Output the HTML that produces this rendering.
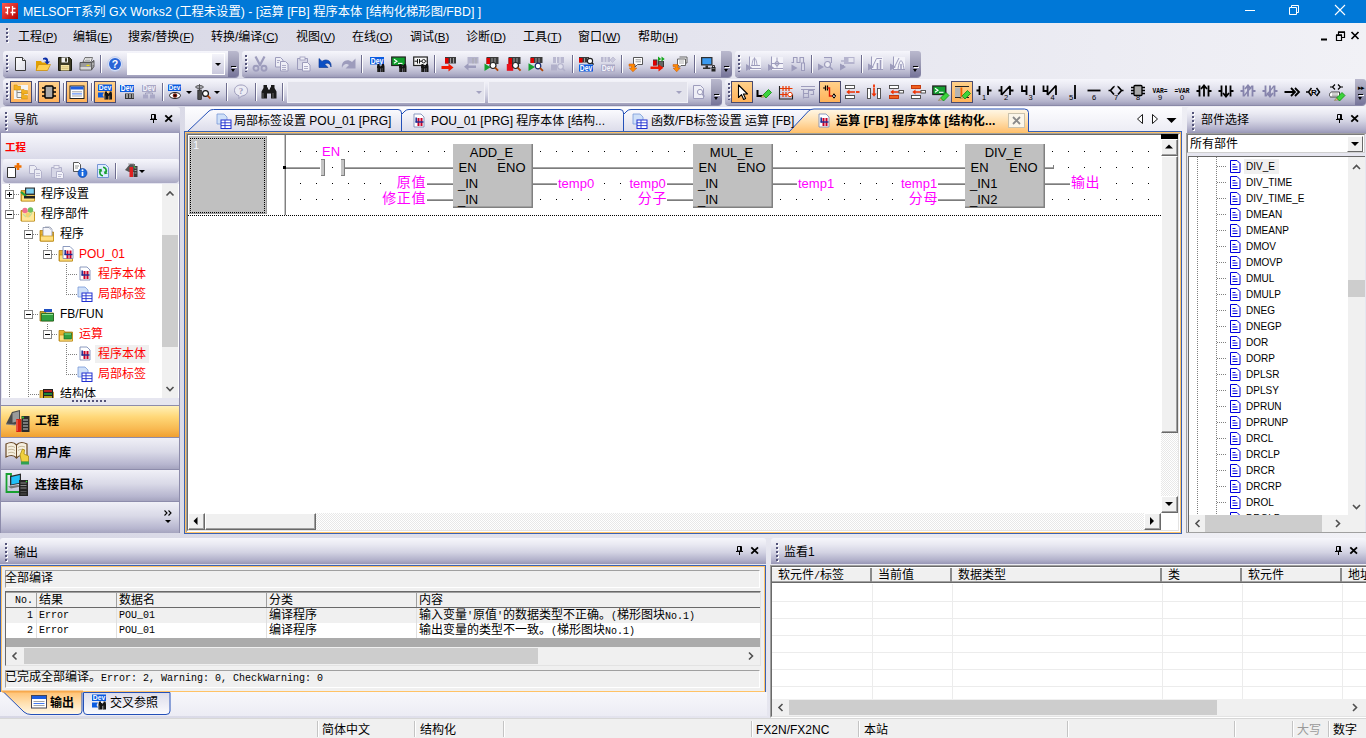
<!DOCTYPE html>
<html lang="zh-CN"><head><meta charset="utf-8"><title>MELSOFT GX Works2</title>
<style>
*{box-sizing:border-box;margin:0;padding:0}
html,body{width:1366px;height:738px;overflow:hidden}
body{position:relative;font-family:"Liberation Sans","Noto Sans CJK SC",sans-serif;font-size:12px;color:#000;
 background:linear-gradient(90deg,#d7d7e5 0%,#e4e4ee 50%,#f1f1f6 100%);line-height:1}
.a{position:absolute}
.t{position:absolute;white-space:nowrap;line-height:14px;height:14px}
svg{position:absolute;overflow:visible}
#title{left:0;top:0;width:1366px;height:23px;background:#0078d7;color:#fff}
.tb{position:absolute;height:26px;border-radius:3px 3px 4px 4px;
 background:linear-gradient(180deg,#f6f6fc 0%,#e6e6f0 30%,#cfcfe0 62%,#b1b0c9 88%,#9c9bb8 100%);
 box-shadow:0 1px 0 #8a89a8}
.cap{position:absolute;top:0;right:0;width:11px;height:26px;border-radius:0 3px 4px 0;
 background:linear-gradient(180deg,#bab9ce 0%,#9c9bb4 50%,#76749a 100%)}
.cap i{position:absolute;left:3px;top:15px;width:5px;height:1px;background:#000;box-shadow:1px 1px 0 #fff}
.cap b{position:absolute;left:3px;top:18px;width:0;height:0;border:3px solid transparent;border-top:3px solid #000;border-bottom:0;border-left-width:2.5px;border-right-width:2.5px}
.grip{position:absolute;left:3px;top:4px;width:3px;height:17px;
 background:repeating-linear-gradient(180deg,#54547a 0,#54547a 2px,transparent 2px,transparent 4px) 0 0/2px 100% no-repeat,repeating-linear-gradient(180deg,transparent 0,transparent 1px,#fff 1px,#fff 3px,transparent 3px,transparent 4px) 1px 0/2px 100% no-repeat}
.sep{position:absolute;top:4px;width:1px;height:18px;background:#6e6d8f;box-shadow:1px 0 0 #fff}
.chk{position:absolute;top:2px;width:22px;height:22px;border:1px solid #4b4b6f;
 background:linear-gradient(180deg,#ffd08a 0%,#ffb25a 100%)}
.ph{position:absolute;height:26px;background:linear-gradient(180deg,#f6f6fb 0%,#e9e9f2 25%,#d3d3e3 55%,#b1b0ca 85%,#9897b6 100%);border-radius:3px 3px 0 0}
.pgrip{position:absolute;left:5px;top:5px;width:3px;height:19px;
 background:repeating-linear-gradient(180deg,#54547a 0,#54547a 2px,transparent 2px,transparent 4px) 0 0/2px 100% no-repeat,repeating-linear-gradient(180deg,transparent 0,transparent 1px,#fff 1px,#fff 3px,transparent 3px,transparent 4px) 1px 0/2px 100% no-repeat}
</style></head>
<body>
<!-- top -->
<div id="title" class="a">
<svg style="left:2px;top:3px" width="16" height="16" viewBox="0 0 16 16"><defs><linearGradient id="gi" x1="0" y1="0" x2="1" y2="1"><stop offset="0" stop-color="#ff5a50"/><stop offset="1" stop-color="#b00000"/></linearGradient></defs><rect width="16" height="16" fill="url(#gi)"/><path d="M3 4.5h5M5.5 4.5v7M3.5 9.5h2M10.5 3v9.5M10.5 5.5h3M8.5 9.5h5" stroke="#fff" stroke-width="1.3" fill="none"/></svg>
<div class="t" id="ttxt" style="left:23px;top:5px;font-size:12.300px;line-height:15px;height:15px">MELSOFT系列 GX Works2 (工程未设置) - [运算 [FB] 程序本体 [结构化梯形图/FBD] ]</div>
<svg style="left:1227px;top:-1px" width="138" height="23" viewBox="0 0 138 23"><path d="M18 11.5h10" stroke="#fff" stroke-width="1" fill="none"/><path d="M62.5 8.5h7v7h-7zM64.5 8.5v-2h7v7h-2" stroke="#fff" stroke-width="1" fill="none"/><path d="M108 6l10 10M118 6l-10 10" stroke="#fff" stroke-width="1.1" fill="none"/></svg>
</div>
<div class="grip" style="left:6px;top:28px;height:15px"></div>
<div class="t" style="left:18px;top:30px">工程<span style="font-size:11.500px">(<u>P</u>)</span></div>
<div class="t" style="left:73px;top:30px">编辑<span style="font-size:11.500px">(<u>E</u>)</span></div>
<div class="t" style="left:128px;top:30px">搜索/替换<span style="font-size:11.500px">(<u>F</u>)</span></div>
<div class="t" style="left:211px;top:30px">转换/编译<span style="font-size:11.500px">(<u>C</u>)</span></div>
<div class="t" style="left:296px;top:30px">视图<span style="font-size:11.500px">(<u>V</u>)</span></div>
<div class="t" style="left:352px;top:30px">在线<span style="font-size:11.500px">(<u>O</u>)</span></div>
<div class="t" style="left:410px;top:30px">调试<span style="font-size:11.500px">(<u>B</u>)</span></div>
<div class="t" style="left:466px;top:30px">诊断<span style="font-size:11.500px">(<u>D</u>)</span></div>
<div class="t" style="left:523px;top:30px">工具<span style="font-size:11.500px">(<u>T</u>)</span></div>
<div class="t" style="left:578px;top:30px">窗口<span style="font-size:11.500px">(<u>W</u>)</span></div>
<div class="t" style="left:638px;top:30px">帮助<span style="font-size:11.500px">(<u>H</u>)</span></div>
<svg style="left:1316px;top:28px" width="50" height="16" viewBox="0 0 50 16"><path d="M5 11.5h6" stroke="#000" stroke-width="2" fill="none"/><path d="M20.5 7.5h5v5h-5zM22.5 7v-2.5h6v5h-2.5" stroke="#000" stroke-width="1.2" fill="none"/><path d="M20 7h6M22 4h7" stroke="#000" stroke-width="1.6"/><path d="M35.5 4l7 7M42.5 4l-7 7" stroke="#000" stroke-width="1.7" fill="none"/></svg>
<!-- tool -->
<div class="tb" style="left:3px;top:51px;width:236px"><div class="grip"></div><div class="cap"><i></i><b></b></div>
<svg style="left:10px;top:5px" width="16" height="16" viewBox="0 0 16 16"><defs><linearGradient id="gn" x1="0" y1="0" x2="1" y2="1"><stop offset="0" stop-color="#fff"/><stop offset="1" stop-color="#dcdce6"/></linearGradient></defs><path d="M2.5 1.5h7l3 3v10h-10z" fill="url(#gn)" stroke="#3a3a3a"/><path d="M9.5 1.5v3h3" fill="#f4f4f4" stroke="#3a3a3a"/></svg>
<svg style="left:32px;top:5px" width="16" height="16" viewBox="0 0 16 16"><path d="M1 5h5l1 1.5h5v8h-11z" fill="#e2a000"/><path d="M1 14.5l2.5-6h12l-3 6z" fill="#ffd050" stroke="#c08000" stroke-width="0.6"/><path d="M8 2.2c3-1.5 5.5 0 5.2 3.2h1.8l-2.8 3.2l-2.8-3.2h1.8c0-1.6-1.2-2.4-3.2-1.6z" fill="#0a2ea8"/></svg>
<svg style="left:53.5px;top:5px" width="16" height="16" viewBox="0 0 16 16"><path d="M1.5 1.5h11l2 2v11h-13z" fill="#3c3a24" stroke="#1c1c10"/><rect x="4.5" y="1.5" width="6.5" height="5" fill="#f2f2f2"/><rect x="8" y="2.2" width="2" height="3.5" fill="#3c3a24"/><rect x="3.8" y="9" width="8.4" height="5.5" fill="#f7e7a6"/><path d="M4.5 10.8h7M4.5 12.6h7" stroke="#cdb870" stroke-width="0.8"/></svg>
<svg style="left:76px;top:5px" width="16" height="16" viewBox="0 0 16 16"><path d="M4 6l2-4.5h7.5l-1.5 4.5z" fill="#f4f4f4" stroke="#555" stroke-width="0.8"/><path d="M6.5 3h5M6 4.5h5" stroke="#888" stroke-width="0.6"/><path d="M1 6.5h11.5l2.5-2v6l-2.5 3.5h-11.5z" fill="#9b9b9b" stroke="#444" stroke-width="0.8"/><path d="M1 6.5h11.5v7.5M12.5 6.5l2.5-2" stroke="#555" stroke-width="0.8" fill="none"/><rect x="1.5" y="11" width="10.5" height="2.5" fill="#d6d6d6"/><rect x="7.5" y="8.8" width="3" height="1.2" fill="#f0e000"/><circle cx="14" cy="8" r="0.7" fill="#ddd"/></svg>
<div class="sep" style="left:97px"></div>
<svg style="left:104px;top:5px" width="16" height="16" viewBox="0 0 16 16"><circle cx="8" cy="8" r="7.3" fill="#dfe6f8" stroke="#b9c6ea" stroke-width="0.8"/><circle cx="8" cy="8" r="6" fill="#2a64d6"/><path d="M4 5a5 4 0 0 1 8 0a6 6 0 0 0 -8 0z" fill="#7fa6f0"/><text x="8" y="12" text-anchor="middle" font-family="Liberation Sans,sans-serif" font-size="10.5" font-weight="bold" fill="#fff">?</text></svg>
<div class="a" style="left:124px;top:2px;width:98px;height:22px;background:#fff"></div>
<div class="a" style="left:209px;top:3px;width:12px;height:20px;background:linear-gradient(180deg,#f4f4fa,#c9c8dc)"></div>
<div class="a" style="left:212px;top:12px;width:0;height:0;border:3px solid transparent;border-top:3px solid #000;border-bottom:0"></div>
</div>
<div class="tb" style="left:242px;top:51px;width:490px"><div class="grip"></div><div class="cap"><i></i><b></b></div>
<svg style="left:9.5px;top:5px" width="16" height="16" viewBox="0 0 16 16"><path d="M3.500 0.500l5 9.500M12.500 0.500l-5 9.500" stroke="#9d9cbc" stroke-width="2.200" fill="none"/><circle cx="4" cy="12.300" r="2.500" fill="none" stroke="#9d9cbc" stroke-width="1.900"/><circle cx="12" cy="12.300" r="2.500" fill="none" stroke="#9d9cbc" stroke-width="1.900"/></svg>
<svg style="left:32px;top:5px" width="16" height="16" viewBox="0 0 16 16"><path d="M1.5 1.5h5l2.5 2.5v7h-7.5z" fill="#eeeef6" stroke="#9d9cbc"/><path d="M6.5 5.5h5l2.500 2.500v7h-7.500z" fill="#eeeef6" stroke="#9d9cbc"/><path d="M8 9.500h4M8 11.500h4M8 13.500h4M3 4.500h3M3 6.500h2" stroke="#9d9cbc" stroke-width="0.8"/></svg>
<svg style="left:54px;top:5px" width="16" height="16" viewBox="0 0 16 16"><path d="M1.500 2.500h10v11h-10z" fill="#d6d6e6" stroke="#9d9cbc"/><rect x="4" y="1" width="5" height="3" fill="#eeeef6" stroke="#9d9cbc" stroke-width="0.8"/><path d="M6.500 6.500h5l2.500 2.500v6h-7.500z" fill="#f3f3fa" stroke="#9d9cbc"/><path d="M8 10.500h4M8 12.500h4" stroke="#9d9cbc" stroke-width="0.8"/></svg>
<svg style="left:76px;top:5px" width="16" height="16" viewBox="0 0 16 16"><path d="M1 2.5v9h9l-3.200-3.200c2.200-2 5.200-1.200 6.200 2.700c1-6-4.500-9-9-5.600z" fill="#0c4fc4" stroke="#06308a" stroke-width="0.6"/></svg>
<svg style="left:98px;top:5px" width="16" height="16" viewBox="0 0 16 16"><path d="M15.500 2.500v10h-10l3.500-3.500c-2.300-2-5.600-1.200-7 3c-1.200-6.500 5-10 10-6z" fill="#9d9cbc"/></svg>
<div class="sep" style="left:119px"></div>
<svg style="left:126.5px;top:5px" width="16" height="16" viewBox="0 0 16 16"><rect x="1" y="1" width="14" height="7.5" fill="#0a5be0"/><text x="1.8" y="7.8" font-family="Liberation Sans,sans-serif" font-size="8.8" font-weight="bold" fill="#fff" textLength="12.4" lengthAdjust="spacingAndGlyphs">Dev</text><path d="M8.5 8h2v1.500h1v6.500h-3.500v-5.500z M13 8h2l0.500 2.500v5.500h-3.500v-6.500h1z" fill="#141414"/><path d="M10.8 10.5h1.600v2h-1.600z" fill="#141414"/><path d="M8.7 12v4M13.2 12v4" stroke="#6a6a6a" stroke-width="0.700"/></svg>
<svg style="left:148.5px;top:5px" width="16" height="16" viewBox="0 0 16 16"><rect x="0.7" y="1" width="13.600" height="8.500" fill="#10a02c" stroke="#222" stroke-width="1.200"/><path d="M3 3.200l3 2l-3 2" stroke="#fff" stroke-width="1.100" fill="none"/><path d="M7 7.400h4.500" stroke="#fff" stroke-width="1.100"/><path d="M8.5 8h2v1.500h1v6.500h-3.500v-5.500z M13 8h2l0.500 2.500v5.500h-3.500v-6.500h1z" fill="#141414"/><path d="M10.8 10.5h1.600v2h-1.600z" fill="#141414"/><path d="M8.7 12v4M13.2 12v4" stroke="#6a6a6a" stroke-width="0.700"/></svg>
<svg style="left:170.5px;top:5px" width="16" height="16" viewBox="0 0 16 16"><rect x="0.700" y="1" width="13.600" height="8.500" fill="#f6f6f6" stroke="#222" stroke-width="1.200"/><path d="M1.500 5.200h3M4.500 3v4.500M6.500 3v4.500M6.500 5.200h2.500M13.500 5.200h-1" stroke="#111" stroke-width="1"/><circle cx="10.700" cy="5.200" r="1.700" fill="none" stroke="#111" stroke-width="0.9"/><path d="M8.5 8h2v1.500h1v6.500h-3.500v-5.500z M13 8h2l0.500 2.500v5.500h-3.500v-6.500h1z" fill="#141414"/><path d="M10.8 10.5h1.600v2h-1.600z" fill="#141414"/><path d="M8.7 12v4M13.2 12v4" stroke="#6a6a6a" stroke-width="0.700"/></svg>
<div class="sep" style="left:192px"></div>
<svg style="left:198.5px;top:5px" width="16" height="16" viewBox="0 0 16 16"><rect x="4" y="1" width="11" height="6.5" fill="#3a3a3a"/><path d="M9.5 2v5.5 M12.5 2v5.5" stroke="#a8a8a8" stroke-width="0.9"/><rect x="4" y="2" width="3.5" height="5.5" fill="#e00000"/><path d="M0.500 10h7v-2.600l5 4.100l-5 4.100v-2.600h-7z" fill="#f01800"/></svg>
<svg style="left:220.5px;top:5px" width="16" height="16" viewBox="0 0 16 16"><rect x="4.5" y="1" width="11" height="6.5" fill="#b5b4cc"/><path d="M10 2v5.5 M13 2v5.5" stroke="#a8a8a8" stroke-width="0.9"/><path d="M13 9.500h-7.500v-2.500l-4.500 3.800l4.500 3.800v-2.500h7.500z" fill="#9d9cbc"/></svg>
<svg style="left:242px;top:5px" width="16" height="16" viewBox="0 0 16 16"><rect x="2.5" y="1" width="12" height="7" fill="#3a3a3a"/><path d="M8 2v6 M11 2v6" stroke="#a8a8a8" stroke-width="0.9"/><rect x="2.5" y="2" width="3.5" height="6" fill="#e00000"/><path d="M0.500 7.500l6 3.800l-6 3.800z" fill="#16a030"/><circle cx="9" cy="9.5" r="3" fill="#fff" stroke="#202020" stroke-width="1.2"/><path d="M11.1 11.6l3 3" stroke="#b04000" stroke-width="1.8"/></svg>
<svg style="left:264px;top:5px" width="16" height="16" viewBox="0 0 16 16"><rect x="2.5" y="1" width="12" height="7" fill="#3a3a3a"/><path d="M8 2v6 M11 2v6" stroke="#a8a8a8" stroke-width="0.9"/><rect x="2.5" y="2" width="3.5" height="6" fill="#e00000"/><rect x="0.800" y="8" width="6.400" height="6.800" fill="#e8101c"/><circle cx="9.5" cy="9.5" r="3" fill="#fff" stroke="#202020" stroke-width="1.2"/><path d="M11.6 11.6l3 3" stroke="#b04000" stroke-width="1.8"/></svg>
<svg style="left:286px;top:5px" width="16" height="16" viewBox="0 0 16 16"><rect x="2.5" y="1" width="12" height="6" fill="#3a3a3a"/><path d="M8 2v5 M11 2v5" stroke="#a8a8a8" stroke-width="0.9"/><rect x="2.5" y="2" width="3.5" height="5" fill="#e00000"/><path d="M0.500 7.200l6.500 3.900l-6.500 3.900z" fill="#16a030"/><circle cx="10" cy="10" r="2.8" fill="#fff" stroke="#1a2a6a" stroke-width="1.2"/><path d="M11.96 11.96l3 3" stroke="#b04000" stroke-width="1.8"/></svg>
<svg style="left:308px;top:5px" width="16" height="16" viewBox="0 0 16 16"><path d="M3 1h11v6h-11z" fill="#b9b8d0"/><path d="M6.500 1v6M10 1v6" stroke="#e6e6f0" stroke-width="1"/><rect x="1" y="8.500" width="6" height="6" fill="#b1b0ca"/><circle cx="10.500" cy="10.500" r="2.800" fill="#e0e0ec" stroke="#b1b0ca" stroke-width="1.100"/><path d="M12.500 12.500l2.500 2.500" stroke="#b1b0ca" stroke-width="1.600"/></svg>
<div class="sep" style="left:330px"></div>
<svg style="left:335.5px;top:5px" width="16" height="16" viewBox="0 0 16 16"><rect x="1" y="1" width="10" height="5.5" fill="#3a3a3a"/><path d="M6.5 2v4.5 M9.5 2v4.5" stroke="#a8a8a8" stroke-width="0.9"/><rect x="1" y="2" width="3.5" height="4.5" fill="#e00000"/><circle cx="12" cy="5" r="2.600" fill="#fff" stroke="#222" stroke-width="1.100"/><path d="M14 7l1.600 1.600" stroke="#222" stroke-width="1.400"/><rect x="1" y="8.5" width="14" height="7" fill="#0a5be0"/><text x="1.8" y="14.8" font-family="Liberation Sans,sans-serif" font-size="8.3" font-weight="bold" fill="#fff" textLength="12.4" lengthAdjust="spacingAndGlyphs">Dev</text></svg>
<svg style="left:357.5px;top:5px" width="16" height="16" viewBox="0 0 16 16"><path d="M1 1h9v5h-9z" fill="#b9b8d0"/><path d="M4 1v5M7 1v5" stroke="#e6e6f0" stroke-width="1"/><path d="M10 4l3-3l2.500 2.500l-3 3z" fill="#c9c8dc" stroke="#b1b0ca" stroke-width="0.600"/><rect x="1" y="8.5" width="14" height="7" fill="#a9a8c6"/><text x="1.8" y="14.8" font-family="Liberation Sans,sans-serif" font-size="8.3" font-weight="bold" fill="#f4f4fb" textLength="12.4" lengthAdjust="spacingAndGlyphs">Dev</text></svg>
<div class="sep" style="left:379px"></div>
<svg style="left:386px;top:5px" width="16" height="16" viewBox="0 0 16 16"><path d="M5.500 1.500h9v7h-5l-2.500 2.500v-2.500h-1.500z" fill="#fff" stroke="#444" stroke-width="0.900"/><path d="M7.500 3.800h5.500M7.500 5.800h5.500" stroke="#888" stroke-width="0.800"/><path d="M1 8h5.500v4h2.300l-3.800 3.800l-3.800-3.800h2.300v-1.800h-2.500z" fill="#ff8a00" stroke="#c85000" stroke-width="0.500"/></svg>
<svg style="left:408px;top:5px" width="16" height="16" viewBox="0 0 16 16"><rect x="3" y="3.5" width="4.5" height="6" fill="#3a3a3a"/><path d="M8.5 4.5v5 M11.5 4.5v5" stroke="#a8a8a8" stroke-width="0.9"/><rect x="3" y="4.5" width="3.5" height="5" fill="#e00000"/><rect x="8" y="5" width="6" height="6" fill="#3a3a3a"/><path d="M10 5.500v5M12 5.500v5" stroke="#aaa" stroke-width="0.800"/><path d="M8 0.500l3.200 2.500l-3.200 2.500zM11.500 0.500l3.200 2.500l-3.200 2.500z" fill="#16a81c"/><path d="M0.500 10.500h8v-2.300l5 3.600l-5 3.600v-2.300h-8z" fill="#f01800"/></svg>
<svg style="left:429.5px;top:5px" width="16" height="16" viewBox="0 0 16 16"><path d="M7.500 1h7.500v6h-1" fill="#f4f4f4" stroke="#555" stroke-width="0.900"/><path d="M5.500 3h8v6.500h-4.500l-2 2v-2h-1.500z" fill="#fff" stroke="#555" stroke-width="0.900"/><path d="M7 5h5M7 7h5" stroke="#999" stroke-width="0.800"/><path d="M1 8.500h5v3.500h2.300l-3.600 3.800l-3.600-3.800h2.200v-1.500h-2.300z" fill="#ff8a00" stroke="#c85000" stroke-width="0.500"/></svg>
<div class="sep" style="left:452px"></div>
<svg style="left:458px;top:5px" width="16" height="16" viewBox="0 0 16 16"><rect x="1" y="1" width="11.500" height="8.500" fill="#2f2f2f"/><rect x="2.300" y="2.200" width="9" height="6" fill="#3a9af0"/><path d="M5.500 9.500h2.500v2h-2.500zM3 11.500h7.500v1.500h-7.500z" fill="#2f2f2f"/><path d="M11.500 11h4v4.500h-4z" fill="#222"/><path d="M12.500 11v-1.500h2v1.500" fill="none" stroke="#222" stroke-width="0.900"/><path d="M12.300 12.500h2.400" stroke="#999" stroke-width="0.700"/></svg>
</div>
<div class="tb" style="left:735px;top:51px;width:186px"><div class="grip"></div><div class="cap"><i></i><b></b></div>
<svg style="left:11px;top:5px" width="16" height="16" viewBox="0 0 16 16"><rect x="3" y="1" width="12" height="13" fill="#f3f3f9"/><path d="M3.500 0.500v13.500M3 12.500h12M5 9.500h9" stroke="#9d9cbc" stroke-width="1"/><path d="M6 9c1-9 4-9 5 0M8.500 1.500v8" stroke="#9d9cbc" stroke-width="0.900" fill="none"/><path d="M0 8l6 3.500l-6 3.500z" fill="#9d9cbc"/></svg>
<svg style="left:33px;top:5px" width="16" height="16" viewBox="0 0 16 16"><rect x="3" y="1" width="12" height="13" fill="#f3f3f9"/><path d="M3.500 0.500v13.500M3 12.500h12M4 7.500h11M9 1.500v10" stroke="#9d9cbc" stroke-width="1"/><circle cx="9" cy="7.500" r="2" fill="none" stroke="#9d9cbc"/><path d="M0 8l6 3.500l-6 3.500z" fill="#9d9cbc"/></svg>
<svg style="left:55px;top:5px" width="16" height="16" viewBox="0 0 16 16"><path d="M1.500 6.500h2v-5h3.500v5h3v-5h3.500v5.500" stroke="#9d9cbc" stroke-width="1.100" fill="none"/><rect x="11.500" y="7" width="3" height="7.500" fill="#d9d9e8" stroke="#9d9cbc"/><path d="M1.5 8.5l6 3.500l-6 3.500z" fill="#9d9cbc"/></svg>
<div class="sep" style="left:76px"></div>
<svg style="left:82.5px;top:5px" width="16" height="16" viewBox="0 0 16 16"><path d="M6 1h8v7h-8z" fill="#d9d9e8"/><path d="M6 1.500h8M13.500 1v6" stroke="#9d9cbc"/><circle cx="9.500" cy="8.500" r="3" fill="#ececf4" stroke="#9d9cbc" stroke-width="1.200"/><path d="M11.700 10.700l3 3" stroke="#9d9cbc" stroke-width="1.500"/><path d="M0 7.5l6 3.500l-6 3.500z" fill="#9d9cbc"/></svg>
<svg style="left:104px;top:5px" width="16" height="16" viewBox="0 0 16 16"><rect x="5" y="1" width="10.500" height="7" fill="#b5b4ce"/><rect x="9.500" y="2" width="5" height="4" fill="#e6e6f0"/><path d="M2 5h3M5 9.500h-3" stroke="#9d9cbc"/><path d="M1 7.5l6 3.500l-6 3.500z" fill="#9d9cbc"/></svg>
<div class="sep" style="left:126px"></div>
<svg style="left:132.5px;top:5px" width="16" height="16" viewBox="0 0 16 16"><rect x="3" y="1" width="12" height="13" fill="#f3f3f9"/><path d="M3.500 0.500v13.500M3 13.500h12" stroke="#9d9cbc"/><path d="M4 12l4.500-9.500h5.500" stroke="#9d9cbc" fill="none"/><path d="M9.500 7v6M12.500 4v9" stroke="#9d9cbc" stroke-width="1.600"/><path d="M0 7.5l6 3.500l-6 3.500z" fill="#9d9cbc"/></svg>
<svg style="left:154.5px;top:5px" width="16" height="16" viewBox="0 0 16 16"><rect x="3" y="1" width="12" height="13" fill="#f3f3f9"/><path d="M3.500 0.500v13.500M3 13.500h12" stroke="#9d9cbc"/><path d="M4 12l5-10M8 13c1.500-11 4.500-11 6 0" stroke="#9d9cbc" fill="none"/><path d="M11 8v5" stroke="#9d9cbc" stroke-width="1.500"/><path d="M0 7.5l6 3.500l-6 3.500z" fill="#9d9cbc"/></svg>
</div>
<div class="tb" style="left:3px;top:79px;width:719px"><div class="grip"></div><div class="cap"><i></i><b></b></div>
<div class="chk" style="left:7px"></div>
<div class="chk" style="left:35px"></div>
<div class="chk" style="left:63px"></div>
<div class="chk" style="left:91px"></div>
<div class="sep" style="left:31.5px"></div>
<div class="sep" style="left:59.5px"></div>
<div class="sep" style="left:87.5px"></div>
<svg style="left:10px;top:5px" width="16" height="16" viewBox="0 0 16 16"><rect x="1" y="1" width="14" height="14" fill="#f4f4f4"/><path d="M4 5v8.500h5M4 8.500h5" stroke="#888" fill="none"/><path d="M1 1h3l0.800 1h2.700v4h-6.500z" fill="#f2b020" stroke="#c88400" stroke-width="0.500"/><path d="M8.500 5.500h2.500l0.800 1h2.700v3.500h-6z" fill="#f2b020" stroke="#c88400" stroke-width="0.500"/><path d="M8.500 10.500h2.500l0.800 1h2.700v3.500h-6z" fill="#f2b020" stroke="#c88400" stroke-width="0.500"/></svg>
<svg style="left:38px;top:5px" width="16" height="16" viewBox="0 0 16 16"><path d="M1 4h14M1 8h14M1 12h14" stroke="#000" stroke-width="1.600"/><rect x="4" y="2" width="8" height="12" rx="1" fill="#a9a9a9" stroke="#000" stroke-width="1.400"/></svg>
<svg style="left:66px;top:5px" width="16" height="16" viewBox="0 0 16 16"><rect x="1" y="2" width="14" height="12.500" fill="#fff" stroke="#222" stroke-width="1"/><rect x="1.500" y="2.500" width="13" height="3" fill="#1e5ee0"/><path d="M3 7.800h10M3 12h10" stroke="#999" stroke-width="0.900"/><path d="M3 9.900h10" stroke="#2a6af0" stroke-width="0.900"/></svg>
<svg style="left:94px;top:5px" width="16" height="16" viewBox="0 0 16 16"><rect x="1" y="0.5" width="14" height="6.5" fill="#0a5be0"/><text x="1.8" y="6.3" font-family="Liberation Sans,sans-serif" font-size="7.8" font-weight="bold" fill="#fff" textLength="12.4" lengthAdjust="spacingAndGlyphs">Dev</text><path d="M1 8.500h6l-1.500 2.500l1.500 2.500h-6z" fill="#0a5be0"/><path d="M8 7.5h2v1.500h1v6.500h-3.500v-5.500z M12.5 7.5h2l0.500 2.500v5.500h-3.500v-6.500h1z" fill="#141414"/><path d="M10.3 10h1.600v2h-1.600z" fill="#141414"/><path d="M8.2 11.5v4M12.7 11.5v4" stroke="#6a6a6a" stroke-width="0.700"/></svg>
<svg style="left:116px;top:5px" width="16" height="16" viewBox="0 0 16 16"><rect x="1" y="1" width="14" height="7" fill="#0a5be0"/><text x="1.8" y="7.3" font-family="Liberation Sans,sans-serif" font-size="8.3" font-weight="bold" fill="#fff" textLength="12.4" lengthAdjust="spacingAndGlyphs">Dev</text><rect x="6" y="9.500" width="9" height="5.500" fill="#333"/><path d="M7 11h2M10 11h2M13 11h1.500M7 13h2M10 13h2M13 13h1.500" stroke="#fff" stroke-width="1.200"/></svg>
<svg style="left:138px;top:5px" width="16" height="16" viewBox="0 0 16 16"><rect x="1" y="1" width="14" height="7" fill="#a9a8c6"/><text x="1.8" y="7.3" font-family="Liberation Sans,sans-serif" font-size="8.3" font-weight="bold" fill="#f4f4fb" textLength="12.4" lengthAdjust="spacingAndGlyphs">Dev</text><path d="M2 10.500h5v4h-5zM9 10.500h5v4h-5z" fill="#a9a8c6"/><path d="M4.500 10.500v-1.500h7v1.500M8 8v1" stroke="#9d9cbc" fill="none"/></svg>
<div class="sep" style="left:159px"></div>
<svg style="left:165px;top:5px" width="16" height="16" viewBox="0 0 16 16"><rect x="0" y="0.5" width="13" height="6.5" fill="#0a5be0"/><text x="0.8" y="6.3" font-family="Liberation Sans,sans-serif" font-size="7.8" font-weight="bold" fill="#fff" textLength="11.4" lengthAdjust="spacingAndGlyphs">Dev</text><ellipse cx="7" cy="11.500" rx="5.500" ry="3" fill="#fff" stroke="#222" stroke-width="1"/><circle cx="7" cy="11.500" r="2.200" fill="#7a1808"/><circle cx="7" cy="11.500" r="0.900" fill="#000"/></svg>
<svg style="left:192px;top:5px" width="16" height="16" viewBox="0 0 16 16"><ellipse cx="4.500" cy="3" rx="3.800" ry="1.600" fill="none" stroke="#444" stroke-width="0.800"/><path d="M4.500 0v6M0.500 3h8" stroke="#444" stroke-width="0.800"/><rect x="2.800" y="6" width="3.600" height="9.500" fill="#4a4a4a" stroke="#111" stroke-width="0.600"/><circle cx="10.500" cy="9.500" r="2.900" fill="#fff" stroke="#111" stroke-width="1.200"/><path d="M12.600 11.600l2.800 3" stroke="#b04000" stroke-width="1.700"/></svg>
<div class="sep" style="left:223px"></div>
<svg style="left:230px;top:5px" width="16" height="16" viewBox="0 0 16 16"><path d="M8 1c4 0 6.500 2.300 6.500 5.500c0 3.200-2.500 5.300-6 5.500l-2.500 2.500v-2.800c-2.800-0.700-4.500-2.700-4.500-5.200c0-3.200 2.500-5.500 6.500-5.500z" fill="#ececf4" stroke="#9d9cbc" stroke-width="1"/><text x="8" y="10" text-anchor="middle" font-family="Liberation Serif,serif" font-weight="bold" font-size="9" fill="#9d9cbc">?</text></svg>
<div class="sep" style="left:252px"></div>
<svg style="left:258px;top:5px" width="16" height="16" viewBox="0 0 16 16"><path d="M2.500 1h3.500v2.500h1v2h2v-2h1v-2.500h3.500v3l2 3.500v7h-5.500v-5h-4v5h-5.500v-7l2-3.500z" fill="#1a1a1a"/><path d="M2 9v5M12 9v5" stroke="#666" stroke-width="1"/></svg>
<div class="sep" style="left:279px"></div>
<div class="a" style="left:183px;top:12px;width:0;height:0;border:3px solid transparent;border-top:3px solid #000;border-bottom:0"></div>
<div class="a" style="left:211px;top:12px;width:0;height:0;border:3px solid transparent;border-top:3px solid #000;border-bottom:0"></div>
<div class="a" style="left:284px;top:2px;width:198px;height:22px;background:#e3e3ec;border:1px solid #f1f1f7"></div>
<div class="a" style="left:472.5px;top:12px;width:0;height:0;border:3px solid transparent;border-top:3px solid #a3a2c0;border-bottom:0"></div>
<div class="a" style="left:485px;top:2px;width:200px;height:22px;background:#e3e3ec;border:1px solid #f1f1f7"></div>
<div class="a" style="left:673px;top:12px;width:0;height:0;border:3px solid transparent;border-top:3px solid #a3a2c0;border-bottom:0"></div>
<svg style="left:688px;top:5px" width="16" height="16" viewBox="0 0 16 16"><path d="M2.500 1.500h7l3 3v10h-10z" fill="#eeeef6" stroke="#9d9cbc"/><circle cx="9" cy="8" r="2.600" fill="#f6f6fb" stroke="#9d9cbc"/><path d="M11 10l2.500 2.500" stroke="#9d9cbc" stroke-width="1.300"/></svg>
</div>
<div class="tb" style="left:725px;top:79px;width:641px"><div class="grip"></div><div class="cap"><i></i><b></b></div>
<div class="chk" style="left:6px"></div>
<div class="chk" style="left:94px"></div>
<div class="chk" style="left:226px"></div>
<svg style="left:9px;top:5px" width="16" height="16" viewBox="0 0 16 16"><path d="M4.500 1v12.500l3-2.800l2.200 4.800l1.900-0.900l-2.200-4.600h4.100z" fill="#fff" stroke="#000" stroke-width="1.100" stroke-linejoin="round"/></svg>
<svg style="left:31px;top:5px" width="16" height="16" viewBox="0 0 16 16"><path d="M1.500 6v6h6" stroke="#000" stroke-width="2" fill="none"/><path d="M7 11l5.5 -5.5l3 3l-5.5 5.5z" fill="#3cd43c" stroke="#0c8a0c" stroke-width="0.8"/><path d="M7 11l-2 2.4l3.6 -0.6z" fill="#f3d98a" stroke="#6a5a20" stroke-width="0.5"/></svg>
<svg style="left:53px;top:5px" width="16" height="16" viewBox="0 0 16 16"><path d="M1.500 4.500h13M1.500 10.500h13" stroke="#e83800" stroke-width="1"/><path d="M1.500 2v13h13v-4.500" stroke="#222" stroke-width="1.100" fill="none"/><path d="M5 2v5M8 2v5M5 8v5M8 8v5M11 2v5" stroke="#e83800" stroke-width="1.200"/><circle cx="12" cy="10.500" r="2.200" fill="#fff" stroke="#e83800" stroke-width="1"/></svg>
<svg style="left:75px;top:5px" width="16" height="16" viewBox="0 0 16 16"><path d="M1 2.500h14M1 5.500h14v0M3.500 5.500v9M3.500 9.500h5v-3h5M8.500 9.500v4h-5M13.500 6.500v4h-3" stroke="#9d9cbc" stroke-width="1.100" fill="none"/></svg>
<svg style="left:97px;top:5px" width="16" height="16" viewBox="0 0 16 16"><path d="M1 4h2.500M3.500 1.500v5M5.500 1.500v5" stroke="#000" stroke-width="1.200"/><path d="M5.500 4h2v8h3.500" stroke="#e01800" stroke-width="1.400" fill="none"/><path d="M10.500 12l1.500-2.200l1.500 2.200l-1.500 2.200z M13.500 12l-1.500-2.200" stroke="#000" stroke-width="1" fill="#fff"/></svg>
<svg style="left:119px;top:5px" width="16" height="16" viewBox="0 0 16 16"><rect x="1.5" y="1.5" width="9" height="3" fill="#fff" stroke="#444" stroke-width="0.900"/><rect x="1.5" y="11.5" width="9" height="3" fill="#fff" stroke="#444" stroke-width="0.900"/><path d="M11 7.200h-5.500v-1.800l-3.200 2.600l3.200 2.600v-1.800h5.500z" fill="#f03000"/><path d="M12 8h3.500" stroke="#f03000" stroke-width="1.800"/></svg>
<svg style="left:141px;top:5px" width="16" height="16" viewBox="0 0 16 16"><rect x="1.5" y="4.5" width="3" height="10" fill="#fff" stroke="#444" stroke-width="0.900"/><rect x="11.5" y="4.5" width="3" height="10" fill="#fff" stroke="#444" stroke-width="0.900"/><path d="M7.200 4v5.500h-1.800l2.600 3.200l2.600-3.200h-1.800v-5.500z" fill="#f03000"/><path d="M8 0.500v3" stroke="#f03000" stroke-width="1.800"/></svg>
<svg style="left:163px;top:5px" width="16" height="16" viewBox="0 0 16 16"><rect x="1.5" y="1.5" width="9" height="3" fill="#fff" stroke="#444" stroke-width="0.900"/><rect x="1.5" y="11.5" width="9" height="3" fill="#f06020" stroke="#c03000" stroke-width="0.900"/><path d="M11 7.200h-5.500v-1.800l-3.200 2.600l3.200 2.600v-1.800h5.500z" fill="#f03000"/><rect x="11" y="6.5" width="4.5" height="2.5" fill="#fff" stroke="#444" stroke-width="0.900"/></svg>
<svg style="left:185px;top:5px" width="16" height="16" viewBox="0 0 16 16"><rect x="1.5" y="1.5" width="9" height="3" fill="#f06020" stroke="#c03000" stroke-width="0.900"/><rect x="1.5" y="11.5" width="9" height="3" fill="#fff" stroke="#444" stroke-width="0.900"/><path d="M11 7.200h-5.500v-1.800l-3.200 2.600l3.200 2.600v-1.800h5.500z" fill="#f03000"/><rect x="11" y="6.5" width="4.5" height="2.5" fill="#fff" stroke="#444" stroke-width="0.900"/></svg>
<svg style="left:207px;top:5px" width="16" height="16" viewBox="0 0 16 16"><rect x="0.800" y="2" width="13" height="8.500" fill="#14a030" stroke="#222" stroke-width="1.300"/><path d="M3 4.200l3 2l-3 2" stroke="#fff" stroke-width="1.100" fill="none"/><path d="M7 8.300h4.500" stroke="#fff" stroke-width="1.100"/><path d="M8.5 14l5.5 -5.5l3 3l-5.5 5.5z" fill="#3cd43c" stroke="#0c8a0c" stroke-width="0.8"/><path d="M8.5 14l-2 2.4l3.6 -0.6z" fill="#f3d98a" stroke="#6a5a20" stroke-width="0.5"/></svg>
<svg style="left:229px;top:5px" width="16" height="16" viewBox="0 0 16 16"><path d="M1 2.500h14M1 13.500h14" stroke="#222" stroke-width="1.200"/><rect x="1" y="3.500" width="5.500" height="9.500" fill="#b4b4b4"/><rect x="6.500" y="3.500" width="1.800" height="9.500" fill="#f06000"/><path d="M8 12l5.5 -5.5l3 3l-5.5 5.5z" fill="#3cd43c" stroke="#0c8a0c" stroke-width="0.8"/><path d="M8 12l-2 2.4l3.6 -0.6z" fill="#f3d98a" stroke="#6a5a20" stroke-width="0.5"/></svg>
<svg style="left:251px;top:5px" width="16" height="16" viewBox="0 0 16 16"><path d="M0.500 6.500h3M3.500 2v9M12 2v9M12 6.500h3.500" stroke="#000" stroke-width="1.800" fill="none"/><text x="8" y="15.5" text-anchor="middle" font-family="Liberation Sans,sans-serif" font-size="7.500" fill="#000">1</text></svg>
<svg style="left:273px;top:5px" width="16" height="16" viewBox="0 0 16 16"><path d="M0.500 6.500h3M3.500 2v9M12 2v9M12 6.500h3.500M3.500 11l8.500-9" stroke="#000" stroke-width="1.800" fill="none"/><text x="8" y="15.5" text-anchor="middle" font-family="Liberation Sans,sans-serif" font-size="7.500" fill="#000">2</text></svg>
<svg style="left:295px;top:5px" width="16" height="16" viewBox="0 0 16 16"><path d="M2 1.500v5.500h4.500M6.500 1.500v9.500M14 1.500v9.500" stroke="#000" stroke-width="1.800" fill="none"/><text x="10.5" y="15.5" text-anchor="middle" font-family="Liberation Sans,sans-serif" font-size="7.500" fill="#000">3</text></svg>
<svg style="left:317px;top:5px" width="16" height="16" viewBox="0 0 16 16"><path d="M1.500 1.500v5.500h4M5.500 1.500v9.500M14 1.500v9.500M5.500 11l8.500-9.500" stroke="#000" stroke-width="1.800" fill="none"/><text x="10.5" y="15.5" text-anchor="middle" font-family="Liberation Sans,sans-serif" font-size="7.500" fill="#000">4</text></svg>
<svg style="left:339px;top:5px" width="16" height="16" viewBox="0 0 16 16"><path d="M11 1v14" stroke="#000" stroke-width="1.800"/><text x="7" y="15.5" text-anchor="middle" font-family="Liberation Sans,sans-serif" font-size="7.500" fill="#000">5</text></svg>
<svg style="left:361px;top:5px" width="16" height="16" viewBox="0 0 16 16"><path d="M1.500 6.500h13" stroke="#000" stroke-width="1.800"/><text x="8" y="15.5" text-anchor="middle" font-family="Liberation Sans,sans-serif" font-size="7.500" fill="#000">6</text></svg>
<svg style="left:383px;top:5px" width="16" height="16" viewBox="0 0 16 16"><path d="M0.500 6.500h2M13.500 6.500h2M6 2.500l-3.500 4l3.500 4M10 2.500l3.500 4l-3.500 4M6 2.500h0.500M10 2.500h-0.500" stroke="#000" stroke-width="1.700" fill="none"/><text x="8" y="15.8" text-anchor="middle" font-family="Liberation Sans,sans-serif" font-size="7.500" fill="#000">7</text></svg>
<svg style="left:405px;top:5px" width="16" height="16" viewBox="0 0 16 16"><path d="M1 3.500h14M1 6.500h14M1 9.500h14" stroke="#000" stroke-width="1.400"/><rect x="4" y="1.500" width="8" height="10" rx="1" fill="#a9a9a9" stroke="#000" stroke-width="1.300"/><text x="8" y="16.2" text-anchor="middle" font-family="Liberation Sans,sans-serif" font-size="7.500" fill="#000">8</text></svg>
<svg style="left:427px;top:5px" width="16" height="16" viewBox="0 0 16 16"><text x="8" y="8.5" text-anchor="middle" font-family="Liberation Mono,monospace" font-weight="bold" font-size="6.5" fill="#000" textLength="15" lengthAdjust="spacingAndGlyphs">VAR=</text><text x="8" y="15.5" text-anchor="middle" font-family="Liberation Sans,sans-serif" font-size="7.500" fill="#000">9</text></svg>
<svg style="left:449px;top:5px" width="16" height="16" viewBox="0 0 16 16"><text x="8" y="8.5" text-anchor="middle" font-family="Liberation Mono,monospace" font-weight="bold" font-size="6.5" fill="#000" textLength="15" lengthAdjust="spacingAndGlyphs">=VAR</text><text x="8" y="15.5" text-anchor="middle" font-family="Liberation Sans,sans-serif" font-size="7.500" fill="#000">0</text></svg>
<svg style="left:471px;top:5px" width="16" height="16" viewBox="0 0 16 16"><path d="M0.500 7h3M3.500 1.500v11M12.500 1.500v11M12.500 7h3" stroke="#000" stroke-width="1.800" fill="none"/><path d="M8 1.500v11M5 5l3-3.500l3 3.500" stroke="#000" stroke-width="1.800" fill="none"/></svg>
<svg style="left:493px;top:5px" width="16" height="16" viewBox="0 0 16 16"><path d="M0.500 7h3M3.500 1.500v11M12.500 1.500v11M12.500 7h3" stroke="#000" stroke-width="1.800" fill="none"/><path d="M8 1.500v11M5 9l3 3.500l3-3.500" stroke="#000" stroke-width="1.800" fill="none"/></svg>
<svg style="left:515px;top:5px" width="16" height="16" viewBox="0 0 16 16"><path d="M0.500 7h3M3.500 1.500v11M12.500 1.500v11M12.500 7h3" stroke="#8684ac" stroke-width="1.800" fill="none"/><path d="M8 1.500v11M5 5l3-3.500l3 3.500" stroke="#8684ac" stroke-width="1.800" fill="none"/><path d="M4 12l8-10" stroke="#8684ac" stroke-width="1.300"/></svg>
<svg style="left:537px;top:5px" width="16" height="16" viewBox="0 0 16 16"><path d="M0.500 7h3M3.500 1.500v11M12.500 1.500v11M12.500 7h3" stroke="#8684ac" stroke-width="1.800" fill="none"/><path d="M8 1.500v11M5 9l3 3.500l3-3.500" stroke="#8684ac" stroke-width="1.800" fill="none"/><path d="M4 12l8-10" stroke="#8684ac" stroke-width="1.300"/></svg>
<svg style="left:559px;top:5px" width="16" height="16" viewBox="0 0 16 16"><path d="M0.500 8h9.500M7 4l4 4l-4 4M11 4l4 4l-4 4" stroke="#000" stroke-width="1.800" fill="none"/></svg>
<svg style="left:581px;top:5px" width="16" height="16" viewBox="0 0 16 16"><path d="M0 8h2.500M5.500 4l-3 4l3 4M10.500 4l3 4l-3 4" stroke="#000" stroke-width="1.500" fill="none"/><text x="8" y="11" text-anchor="middle" font-family="Liberation Sans,sans-serif" font-size="8" font-weight="bold" fill="#000">R</text></svg>
<svg style="left:603px;top:5px" width="16" height="16" viewBox="0 0 16 16"><path d="M2 3h2M13 3h2M7 0.500l-2.500 2.500l2.500 2.500M10 0.500l2.500 2.500l-2.500 2.500" stroke="#000" stroke-width="1.200" fill="none"/><path d="M3.500 8h8v5h-9c-1.500-1-1.500-4 1-5z" fill="#fff" stroke="#333" stroke-width="0.900"/><path d="M4 10h6M4 11.800h6" stroke="#777" stroke-width="0.700"/><path d="M8.5 14l5.5 -5.5l3 3l-5.5 5.5z" fill="#3cd43c" stroke="#0c8a0c" stroke-width="0.8"/><path d="M8.5 14l-2 2.4l3.6 -0.6z" fill="#f3d98a" stroke="#6a5a20" stroke-width="0.5"/></svg>
<div class="a" style="right:2px;top:5px;font-size:7px;line-height:7px;letter-spacing:-1px;color:#000">&#9656;&#9656;</div>
</div>
<!-- nav -->
<div class="ph" style="left:0;top:107px;width:180px"><div class="pgrip"></div><div class="t" style="left:14px;top:6px">导航</div>
<svg style="left:147px;top:5px" width="28" height="14" viewBox="0 0 28 14"><path d="M4.500 2.500h4v4.500h-4zM7.500 2.500v4.500M3 7.500h7M6.500 8v3" stroke="#000" stroke-width="1" fill="none"/><path d="M18.300 3.400l6.700 6.200M25 3.400l-6.700 6.200" stroke="#000" stroke-width="1.900"/></svg></div>
<div class="a" style="left:0;top:133px;width:180px;height:400px;background:#e6e6f0;border:1px solid #8d8cab;border-top:0"></div>
<div class="a" style="left:1px;top:133px;width:178px;height:26px;background:linear-gradient(180deg,#f7f7fc,#dadae9)"></div>
<div class="t" style="left:5px;top:140px;color:#f00;font-weight:bold;font-size:10.500px">工程</div>
<div class="a" style="left:3px;top:159px;width:176px;height:24px;border-radius:3px 3px 4px 4px;background:linear-gradient(180deg,#f6f6fc 0%,#e4e4ef 35%,#c9c9dc 70%,#a9a8c3 100%)">
<svg style="left:3px;top:4px" width="16" height="16" viewBox="0 0 16 16"><path d="M1.500 4.500h8v10h-8z" fill="#fff" stroke="#333"/><path d="M12 0v7M8.500 3.500h7" stroke="#f07000" stroke-width="2.600"/></svg>
<svg style="left:25px;top:5px" width="16" height="16" viewBox="0 0 16 16"><path d="M1.500 1.500h5l2 2v6h-7z" fill="#ececf4" stroke="#b1b0ca"/><path d="M6.500 5.500h5l2 2v7h-7z" fill="#ececf4" stroke="#b1b0ca"/><path d="M8 9.500h4M8 11.500h4" stroke="#b1b0ca" stroke-width="0.800"/></svg>
<svg style="left:47px;top:5px" width="16" height="16" viewBox="0 0 16 16"><path d="M1.500 3.500h10v10h-10z" fill="#d6d6e6" stroke="#b1b0ca"/><rect x="4" y="1.500" width="5" height="3" fill="#ececf4" stroke="#b1b0ca" stroke-width="0.800"/><path d="M6.500 7.500h5l2 2v5h-7z" fill="#f3f3fa" stroke="#b1b0ca"/><path d="M8 10.500h4M8 12.500h3" stroke="#b1b0ca" stroke-width="0.800"/></svg>
<svg style="left:69px;top:3px" width="16" height="16" viewBox="0 0 16 16"><path d="M1.500 0.500h5l2 2v7h-7z" fill="#fff" stroke="#444" stroke-width="0.900"/><path d="M3 4h4M3 6h3" stroke="#666" stroke-width="0.700"/><circle cx="10.500" cy="11" r="4.500" fill="#1a6ae0" stroke="#0a3a9a" stroke-width="0.600"/><path d="M10.500 10v4" stroke="#fff" stroke-width="1.700"/><circle cx="10.500" cy="8.200" r="1" fill="#fff"/></svg>
<svg style="left:92px;top:4px" width="16" height="16" viewBox="0 0 16 16"><path d="M2.500 1.500h8l3 3v10h-11z" fill="#dcecff" stroke="#6a8ad0" stroke-width="0.900"/><path d="M8 3.500a4.200 4.200 0 0 1 3.600 6.200l1.200 0.700l-3.300 0.900l-0.700-3.300l1.200 0.700a2.500 2.500 0 0 0 -2-3.700z M8 13.500a4.200 4.200 0 0 1 -3.600-6.200l-1.200-0.700l3.300-0.900l0.700 3.300l-1.200-0.700a2.500 2.500 0 0 0 2 3.700z" fill="#18a030"/></svg>
<div class="a" style="left:112px;top:4px;width:1px;height:16px;background:#6e6d8f;box-shadow:1px 0 0 #fff"></div>
<svg style="left:121px;top:3px" width="16" height="16" viewBox="0 0 16 16"><path d="M1 8l5-6h5v8h-6z" fill="#555"/><path d="M4 2h6v7" fill="none" stroke="#888" stroke-width="0.800"/><rect x="5.500" y="5" width="3.500" height="10" fill="#e02020"/><rect x="9.500" y="4" width="4" height="11" fill="#3a3a3a"/><path d="M10.500 6h2M10.500 8.500h2M10.500 11h2" stroke="#bbb" stroke-width="0.800"/><circle cx="10.500" cy="5" r="0.700" fill="#30e030"/></svg>
<div class="a" style="left:136px;top:11px;width:0;height:0;border:3px solid transparent;border-top:3px solid #000;border-bottom:0"></div>
</div>
<div class="a" style="left:2px;top:184px;width:177px;height:214px;background:#fff;overflow:hidden">
<div class="a" style="left:7px;top:0px;width:1px;height:216px;background:repeating-linear-gradient(180deg,#808080 0,#808080 1px,transparent 1px,transparent 2px)"></div>
<div class="a" style="left:26px;top:40px;width:1px;height:176px;background:repeating-linear-gradient(180deg,#808080 0,#808080 1px,transparent 1px,transparent 2px)"></div>
<div class="a" style="left:45px;top:60px;width:1px;height:10px;background:repeating-linear-gradient(180deg,#808080 0,#808080 1px,transparent 1px,transparent 2px)"></div>
<div class="a" style="left:64px;top:80px;width:1px;height:30px;background:repeating-linear-gradient(180deg,#808080 0,#808080 1px,transparent 1px,transparent 2px)"></div>
<div class="a" style="left:45px;top:140px;width:1px;height:10px;background:repeating-linear-gradient(180deg,#808080 0,#808080 1px,transparent 1px,transparent 2px)"></div>
<div class="a" style="left:64px;top:160px;width:1px;height:30px;background:repeating-linear-gradient(180deg,#808080 0,#808080 1px,transparent 1px,transparent 2px)"></div>
<div class="a" style="left:12px;top:10px;width:6px;height:1px;background:repeating-linear-gradient(90deg,#808080 0,#808080 1px,transparent 1px,transparent 2px)"></div>
<div class="a" style="left:3px;top:6px;width:9px;height:9px;border:1px solid #848484;background:#fff"></div><div class="a" style="left:5px;top:10px;width:5px;height:1px;background:#000"></div><div class="a" style="left:7px;top:8px;width:1px;height:5px;background:#000"></div>
<svg style="left:18px;top:2px" width="16" height="16" viewBox="0 0 16 16"><path d="M1 4.500h5l1 1.500h7.500v9h-13.500z" fill="#e8b030" stroke="#a87400" stroke-width="0.700"/><path d="M1.500 15v-6h13v6z" fill="#ffdf80" stroke="#b88400" stroke-width="0.600"/><rect x="5" y="1.500" width="10" height="7.500" fill="#333"/><rect x="6.200" y="2.600" width="7.600" height="5" fill="#7ad0f0"/><path d="M1 6l5 4" stroke="#20a040" stroke-width="2.200"/><rect x="4" y="10" width="11" height="2.500" fill="#222"/></svg>
<div class="t" style="left:39px;top:3px;color:#000">程序设置</div>
<div class="a" style="left:12px;top:30px;width:6px;height:1px;background:repeating-linear-gradient(90deg,#808080 0,#808080 1px,transparent 1px,transparent 2px)"></div>
<div class="a" style="left:3px;top:26px;width:9px;height:9px;border:1px solid #848484;background:#fff"></div><div class="a" style="left:5px;top:30px;width:5px;height:1px;background:#000"></div>
<svg style="left:18px;top:22px" width="16" height="16" viewBox="0 0 16 16"><path d="M1 4.500h5l1 1.500h7.500v9h-13.500z" fill="#e8b030" stroke="#a87400" stroke-width="0.700"/><path d="M1.500 15v-6h13v6z" fill="#ffdf80" stroke="#b88400" stroke-width="0.600"/><rect x="2" y="6" width="12" height="8.500" fill="#ffe79a"/><circle cx="5" cy="4.500" r="2.700" fill="#f07090"/><circle cx="10.500" cy="4" r="2.700" fill="#70c060"/><circle cx="8" cy="9" r="2.500" fill="#f4d470"/><path d="M3 8l3 3M12 7l-3 4" stroke="#c0e0a0" stroke-width="1.200"/></svg>
<div class="t" style="left:39px;top:23px;color:#000">程序部件</div>
<div class="a" style="left:31px;top:50px;width:6px;height:1px;background:repeating-linear-gradient(90deg,#808080 0,#808080 1px,transparent 1px,transparent 2px)"></div>
<div class="a" style="left:22px;top:46px;width:9px;height:9px;border:1px solid #848484;background:#fff"></div><div class="a" style="left:24px;top:50px;width:5px;height:1px;background:#000"></div>
<svg style="left:37px;top:42px" width="16" height="16" viewBox="0 0 16 16"><path d="M1 4.500h5l1 1.500h7.500v9h-13.500z" fill="#e8b030" stroke="#a87400" stroke-width="0.700"/><path d="M1.500 15v-6h13v6z" fill="#ffdf80" stroke="#b88400" stroke-width="0.600"/><path d="M4 1.500h6l3 3v8h-9z" fill="#f6f6fa" stroke="#8890a8" stroke-width="0.800"/><path d="M6 1h5l2.500 2.500" fill="none" stroke="#8890a8" stroke-width="0.700"/><path d="M1.500 15v-5h13v5z" fill="#ffdf80" stroke="#b88400" stroke-width="0.600"/></svg>
<div class="t" style="left:58px;top:43px;color:#000">程序</div>
<div class="a" style="left:50px;top:70px;width:6px;height:1px;background:repeating-linear-gradient(90deg,#808080 0,#808080 1px,transparent 1px,transparent 2px)"></div>
<div class="a" style="left:41px;top:66px;width:9px;height:9px;border:1px solid #848484;background:#fff"></div><div class="a" style="left:43px;top:70px;width:5px;height:1px;background:#000"></div>
<svg style="left:56px;top:62px" width="16" height="16" viewBox="0 0 16 16"><path d="M1 4.500h5l1 1.500h7.500v9h-13.500z" fill="#e8b030" stroke="#a87400" stroke-width="0.700"/><path d="M1.500 15v-6h13v6z" fill="#ffdf80" stroke="#b88400" stroke-width="0.600"/><path d="M5 0.5h7l3 3v9h-10z" fill="#fff" stroke="#7f8fb8" stroke-width="0.900"/><path d="M9.5 4.5v8M12.5 4.5v8" stroke="#c80028" stroke-width="2"/><path d="M6.5 8.5h8" stroke="#1c2c94" stroke-width="1.400"/><path d="M7.2 4v5" stroke="#1c2c94" stroke-width="1.500"/></svg>
<div class="t" style="left:77px;top:63px;color:#f00">POU_01</div>
<div class="a" style="left:64px;top:90px;width:11px;height:1px;background:repeating-linear-gradient(90deg,#808080 0,#808080 1px,transparent 1px,transparent 2px)"></div>
<svg style="left:75px;top:82px" width="16" height="16" viewBox="0 0 16 16"><path d="M3 1h7l3 3v10h-10z" fill="#fff" stroke="#7f8fb8" stroke-width="0.900"/><path d="M7.5 5v8M10.5 5v8" stroke="#c80028" stroke-width="2"/><path d="M4.5 9h8" stroke="#1c2c94" stroke-width="1.400"/><path d="M5.2 4.5v5" stroke="#1c2c94" stroke-width="1.500"/></svg>
<div class="t" style="left:96px;top:83px;color:#f00">程序本体</div>
<div class="a" style="left:64px;top:110px;width:11px;height:1px;background:repeating-linear-gradient(90deg,#808080 0,#808080 1px,transparent 1px,transparent 2px)"></div>
<svg style="left:75px;top:102px" width="16" height="16" viewBox="0 0 16 16"><path d="M1 1h7l3 3v7h-10z" fill="#cfe0f8" stroke="#7a9ad8" stroke-width="0.800"/><rect x="5" y="7" width="10" height="8.500" fill="#fff" stroke="#2030d0" stroke-width="1"/><path d="M5 9.8h10M5 12.6h10M9 7v8.500" stroke="#2030d0" stroke-width="0.900"/></svg>
<div class="t" style="left:96px;top:103px;color:#f00">局部标签</div>
<div class="a" style="left:31px;top:130px;width:6px;height:1px;background:repeating-linear-gradient(90deg,#808080 0,#808080 1px,transparent 1px,transparent 2px)"></div>
<div class="a" style="left:22px;top:126px;width:9px;height:9px;border:1px solid #848484;background:#fff"></div><div class="a" style="left:24px;top:130px;width:5px;height:1px;background:#000"></div>
<svg style="left:37px;top:122px" width="16" height="16" viewBox="0 0 16 16"><path d="M1 5.500h5l1 1.500h7.500v8h-13.500z" fill="#c8a030" stroke="#806000" stroke-width="0.700"/><path d="M2.500 15v-7.500h12v7.500z" fill="#30a040" stroke="#106020" stroke-width="0.700"/><rect x="5" y="3" width="8" height="3" fill="#2050c0"/><path d="M3 8.500h11" stroke="#90e090" stroke-width="1"/></svg>
<div class="t" style="left:58px;top:123px;color:#000">FB/FUN</div>
<div class="a" style="left:50px;top:150px;width:6px;height:1px;background:repeating-linear-gradient(90deg,#808080 0,#808080 1px,transparent 1px,transparent 2px)"></div>
<div class="a" style="left:41px;top:146px;width:9px;height:9px;border:1px solid #848484;background:#fff"></div><div class="a" style="left:43px;top:150px;width:5px;height:1px;background:#000"></div>
<svg style="left:56px;top:142px" width="16" height="16" viewBox="0 0 16 16"><path d="M1 4.500h5l1 1.500h7.500v9h-13.500z" fill="#e8b030" stroke="#a87400" stroke-width="0.700"/><path d="M1.500 15v-6h13v6z" fill="#ffdf80" stroke="#b88400" stroke-width="0.600"/><rect x="6" y="7" width="7.500" height="6" fill="#30a040" stroke="#106020" stroke-width="0.600"/><path d="M6.500 8h6.500" stroke="#a0f0a0" stroke-width="0.900"/></svg>
<div class="t" style="left:77px;top:143px;color:#f00">运算</div>
<div class="a" style="left:64px;top:170px;width:11px;height:1px;background:repeating-linear-gradient(90deg,#808080 0,#808080 1px,transparent 1px,transparent 2px)"></div>
<div class="a" style="left:93px;top:161px;width:54px;height:18px;background:#f0f0f0"></div>
<svg style="left:75px;top:162px" width="16" height="16" viewBox="0 0 16 16"><path d="M3 1h7l3 3v10h-10z" fill="#fff" stroke="#7f8fb8" stroke-width="0.900"/><path d="M7.5 5v8M10.5 5v8" stroke="#c80028" stroke-width="2"/><path d="M4.5 9h8" stroke="#1c2c94" stroke-width="1.400"/><path d="M5.2 4.5v5" stroke="#1c2c94" stroke-width="1.500"/></svg>
<div class="t" style="left:96px;top:163px;color:#f00">程序本体</div>
<div class="a" style="left:64px;top:190px;width:11px;height:1px;background:repeating-linear-gradient(90deg,#808080 0,#808080 1px,transparent 1px,transparent 2px)"></div>
<svg style="left:75px;top:182px" width="16" height="16" viewBox="0 0 16 16"><path d="M1 1h7l3 3v7h-10z" fill="#cfe0f8" stroke="#7a9ad8" stroke-width="0.800"/><rect x="5" y="7" width="10" height="8.500" fill="#fff" stroke="#2030d0" stroke-width="1"/><path d="M5 9.8h10M5 12.6h10M9 7v8.500" stroke="#2030d0" stroke-width="0.900"/></svg>
<div class="t" style="left:96px;top:183px;color:#f00">局部标签</div>
<div class="a" style="left:26px;top:210px;width:11px;height:1px;background:repeating-linear-gradient(90deg,#808080 0,#808080 1px,transparent 1px,transparent 2px)"></div>
<svg style="left:37px;top:202px" width="16" height="16" viewBox="0 0 16 16"><path d="M1 4.500h5l1 1.500h7.500v9h-13.500z" fill="#e8b030" stroke="#a87400" stroke-width="0.700"/><rect x="4" y="3" width="10" height="10" fill="#222"/><path d="M5 5h8" stroke="#e02020" stroke-width="1.600"/><path d="M5 8h8" stroke="#20a040" stroke-width="1.600"/><path d="M5 11h8" stroke="#e0c020" stroke-width="1.600"/></svg>
<div class="t" style="left:58px;top:203px;color:#000">结构体</div>
<div class="a" style="left:160px;top:0;width:16px;height:214px;background:#f0f0f0"></div>
<div class="a" style="left:160px;top:51px;width:16px;height:112px;background:#cdcdcd"></div>
<svg style="left:160px;top:0px" width="16" height="214" viewBox="0 0 16 214"><path d="M4.500 11.500l3.500-3.500l3.500 3.500M4.500 203l3.500 3.500l3.500-3.500" stroke="#505050" stroke-width="1.600" fill="none"/></svg>
</div>
<div class="a" style="left:72px;top:400px;width:34px;height:2px;background:repeating-linear-gradient(90deg,#54547a 0,#54547a 2px,transparent 2px,transparent 4px)"></div>
<div class="a" style="left:1px;top:405px;width:178px;height:32px;background:linear-gradient(180deg,#fff0b8 0%,#ffd878 35%,#f8b850 75%,#f0a030 100%);border-top:1px solid #8d8cab"></div><div class="t" style="left:35px;top:414px;font-weight:bold;font-size:12px">工程</div><svg style="left:6px;top:409px" width="24" height="24" viewBox="0 0 24 24"><path d="M0 15l6-12l8-2v12l-5 3z" fill="#4a4a4a"/><path d="M6.500 4l6.500-1.800v9.500l-6.500 2z" fill="#9a9a9a"/><path d="M0 15l9 1l5-3" stroke="#888" fill="none"/><rect x="10" y="10" width="5.500" height="13" rx="1" fill="#d82010"/><path d="M11 11v11" stroke="#f08070" stroke-width="1"/><rect x="15.500" y="7" width="8" height="16" fill="#2c2c2c"/><path d="M17 11h5M17 14h5M17 17h5M17 20h5" stroke="#c8c8c8" stroke-width="1.200"/><circle cx="17" cy="8.500" r="0.900" fill="#30e030"/></svg>
<div class="a" style="left:1px;top:437px;width:178px;height:32px;background:linear-gradient(180deg,#f0f0f7 0%,#d9d9e7 45%,#b7b6cf 85%,#a5a4bf 100%);border-top:1px solid #8d8cab"></div><div class="t" style="left:35px;top:446px;font-weight:bold;font-size:12px">用户库</div><svg style="left:5px;top:441px" width="24" height="24" viewBox="0 0 24 24"><path d="M1 3c4-2 8-2 10.500 1c2.500-3 6.500-3 10.500-1v13c-4-2-8-2-10.500 1c-2.500-3-6.500-3-10.500-1z" fill="#f6efe0" stroke="#6a4a28" stroke-width="1.200"/><path d="M11.500 4v13" stroke="#6a4a28"/><path d="M3 6c3-1 5-1 7 0.500M3 9c3-1 5-1 7 0.500M3 12c3-1 5-1 7 0.500M13 6.500c2-1.500 4-1.500 7-0.500M13 9.500c2-1.500 4-1.500 7-0.500" stroke="#b8a888" stroke-width="0.800" fill="none"/><path d="M15 14l2.500-6l2 1l-0.500 4l4.500 2v6h-7z" fill="#f0d040" stroke="#a08000" stroke-width="0.700"/><rect x="16" y="20.500" width="8" height="3" fill="#30a050"/></svg>
<div class="a" style="left:1px;top:469px;width:178px;height:32px;background:linear-gradient(180deg,#f0f0f7 0%,#d9d9e7 45%,#b7b6cf 85%,#a5a4bf 100%);border-top:1px solid #8d8cab"></div><div class="t" style="left:35px;top:478px;font-weight:bold;font-size:12px">连接目标</div><svg style="left:5px;top:472px" width="24" height="24" viewBox="0 0 24 24"><path d="M6 6v-4h-4.500v18h13" stroke="#18a030" stroke-width="1.800" fill="none"/><path d="M5 4l11-2.500v10l-11 2z" fill="#2a2a2a"/><path d="M6.300 5l8.500-2v7.800l-8.500 1.700z" fill="#20c0f8"/><path d="M3 14.500l10-1.500l3 1.500l-10 2z" fill="#777"/><rect x="14" y="8" width="9" height="16" fill="#242424"/><path d="M15.500 11h6M15.500 13.500h6M15.500 16h6" stroke="#8a8a8a" stroke-width="1"/><path d="M15.500 19.500h6M15.500 22h6" stroke="#555" stroke-width="1"/><circle cx="21.500" cy="9.500" r="0.800" fill="#30e030"/></svg>
<div class="a" style="left:1px;top:501px;width:178px;height:32px;background:linear-gradient(180deg,#f0f0f7 0%,#d9d9e7 45%,#b7b6cf 85%,#a5a4bf 100%);border-top:1px solid #8d8cab"></div>
<svg style="left:163px;top:509px" width="10" height="16" viewBox="0 0 10 16"><path d="M1.500 1.500l2.500 2.500l-2.500 2.500M5.500 1.500l2.500 2.500l-2.500 2.500" stroke="#000" stroke-width="1.100" fill="none"/><path d="M2 11h6l-3 3z" fill="#000"/></svg>
<!-- editor -->
<div class="a" style="left:185px;top:107px;width:997px;height:25px;background:linear-gradient(180deg,#fdfdff,#ececf4)"></div>
<svg style="left:0;top:0" width="1366" height="140" viewBox="0 0 1366 140"><defs><linearGradient id="gt" x1="0" y1="0" x2="0" y2="1"><stop offset="0" stop-color="#fbfbfe"/><stop offset="1" stop-color="#dcdcea"/></linearGradient><linearGradient id="ga" x1="0" y1="0" x2="0" y2="1"><stop offset="0" stop-color="#fff8e8"/><stop offset="0.500" stop-color="#ffe0b0"/><stop offset="1" stop-color="#ffc070"/></linearGradient></defs>
<path d="M186 131.500h995.500" stroke="#2450b8" stroke-width="1"/>
<path d="M187.500 131.500L209 111Q210.500 109.500 213.500 109.500H398Q401.500 109.500 401.500 113V131.500" fill="url(#gt)" stroke="#2450b8"/>
<path d="M401.500 131.500V114.500L405 111Q406.500 109.500 409 109.500H620Q623.500 109.500 623.500 113V131.500" fill="url(#gt)" stroke="#2450b8"/>
<path d="M623.500 131.500V114.500L627 111Q628.500 109.500 631 109.500H812V131.500" fill="url(#gt)" stroke="#2450b8"/>
<path d="M788.500 132.500L808.500 111Q810.500 109 814 109H1024.500Q1028.500 109 1028.500 112.500V132.500" fill="url(#ga)" stroke="#2450b8"/>
</svg>
<svg style="left:216px;top:113px" width="16" height="16" viewBox="0 0 16 16"><path d="M1 1h7l3 3v7h-10z" fill="#cfe0f8" stroke="#7a9ad8" stroke-width="0.800"/><rect x="5" y="7" width="10" height="8.500" fill="#fff" stroke="#2030d0" stroke-width="1"/><path d="M5 9.8h10M5 12.6h10M9 7v8.500" stroke="#2030d0" stroke-width="0.900"/></svg>
<div class="t" style="left:234px;top:114px">局部标签设置 POU_01 [PRG]</div>
<svg style="left:411px;top:113px" width="16" height="16" viewBox="0 0 16 16"><path d="M3 1h7l3 3v10h-10z" fill="#fff" stroke="#7f8fb8" stroke-width="0.900"/><path d="M7.5 5v8M10.5 5v8" stroke="#c80028" stroke-width="2"/><path d="M4.5 9h8" stroke="#1c2c94" stroke-width="1.400"/><path d="M5.2 4.5v5" stroke="#1c2c94" stroke-width="1.500"/></svg>
<div class="t" style="left:431px;top:114px">POU_01 [PRG] 程序本体 [结构...</div>
<svg style="left:632px;top:113px" width="16" height="16" viewBox="0 0 16 16"><path d="M1 1h7l3 3v7h-10z" fill="#cfe0f8" stroke="#7a9ad8" stroke-width="0.800"/><rect x="5" y="7" width="10" height="8.500" fill="#fff" stroke="#2030d0" stroke-width="1"/><path d="M5 9.8h10M5 12.6h10M9 7v8.500" stroke="#2030d0" stroke-width="0.900"/></svg>
<div class="t" style="left:651px;top:114px">函数/FB标签设置 运算 [FB]</div>
<svg style="left:816px;top:113px" width="16" height="16" viewBox="0 0 16 16"><path d="M3 1h7l3 3v10h-10z" fill="#fff" stroke="#7f8fb8" stroke-width="0.900"/><path d="M7.5 5v8M10.5 5v8" stroke="#c80028" stroke-width="2"/><path d="M4.5 9h8" stroke="#1c2c94" stroke-width="1.400"/><path d="M5.2 4.5v5" stroke="#1c2c94" stroke-width="1.500"/></svg>
<div class="t" style="left:836px;top:114px;font-weight:bold;letter-spacing:0.180px">运算 [FB] 程序本体 [结构化...</div>
<div class="a" style="left:1008px;top:113px;width:17px;height:15px;background:#fbf6ea;border:1px solid #c9c2ae"></div><svg style="left:1008px;top:113px" width="17" height="15" viewBox="0 0 17 15"><path d="M5 4l7 7M12 4l-7 7" stroke="#8a8a8a" stroke-width="1.800"/></svg>
<svg style="left:1130px;top:112px" width="50" height="14" viewBox="0 0 50 14"><path d="M12.500 2.500v9l-5-4.500z" fill="#fff" stroke="#000" stroke-width="0.900"/><path d="M22.500 2.500v9l5-4.500z" fill="#fff" stroke="#000" stroke-width="0.900"/><path d="M36.500 6h10l-5 5z" fill="#000"/></svg>
<div class="a" style="left:184px;top:131px;width:998px;height:403px;background:#3a62b4"></div>
<div class="a" style="left:185px;top:132px;width:996px;height:401px;background:#ffc266"></div>
<div class="a" style="left:186px;top:133px;width:994px;height:399px;background:#fff;border-left:1px solid #a0a0a0;border-top:1px solid #a0a0a0"></div>
<div class="a" style="left:187px;top:134px;width:992px;height:397px;background:#fff;border-left:1px solid #696969;border-top:1px solid #696969;border-right:1px solid #e3e3e3;border-bottom:1px solid #e3e3e3"></div>
<div class="a" style="left:790px;top:131px;width:238px;height:1px;background:#ffc477"></div>
<svg style="left:0;top:0" width="1366" height="230" viewBox="0 0 1366 230">
<rect x="189" y="136" width="78" height="78" fill="#c0c0c0"/><path d="M266.500 136v78M189 213.500h78" stroke="#9a9a9a"/><path d="M190 138.500h76M190 212.500h76M190.500 138v75M264.500 138v75" stroke="#000" stroke-dasharray="1 1"/><path d="M191 139.500h73M191.500 139v73" stroke="#d4d4d4" stroke-dasharray="1 1" stroke-dashoffset="1"/>
<path d="M188 215.500h973" stroke="#000" stroke-dasharray="1 1"/>
<rect x="284" y="135" width="1" height="80" fill="#c4c4c4"/><rect x="285" y="135" width="1" height="80" fill="#808080"/>
<rect x="283" y="166" width="3" height="3" fill="#000"/>
<rect x="286" y="167" width="34" height="1" fill="#a4a4a4"/><rect x="286" y="168" width="34" height="1" fill="#7c7c7c"/>
<rect x="345" y="167" width="108" height="1" fill="#a4a4a4"/><rect x="345" y="168" width="108" height="1" fill="#7c7c7c"/>
<rect x="321" y="159" width="4" height="17" fill="#808080"/><rect x="321" y="160" width="3" height="15" fill="#c4c4c4"/>
<rect x="341" y="159" width="4" height="17" fill="#808080"/><rect x="341" y="160" width="3" height="15" fill="#c4c4c4"/>
<rect x="453" y="144" width="80" height="64" fill="#808080"/><rect x="453" y="144" width="78.500" height="62.500" fill="#c0c0c0"/>
<rect x="693" y="144" width="80" height="64" fill="#808080"/><rect x="693" y="144" width="78.500" height="62.500" fill="#c0c0c0"/>
<rect x="965" y="144" width="80" height="64" fill="#808080"/><rect x="965" y="144" width="78.500" height="62.500" fill="#c0c0c0"/>
<rect x="427" y="183" width="26" height="1" fill="#a4a4a4"/><rect x="427" y="184" width="26" height="1" fill="#7c7c7c"/>
<rect x="427" y="199" width="26" height="1" fill="#a4a4a4"/><rect x="427" y="200" width="26" height="1" fill="#7c7c7c"/>
<rect x="533" y="167" width="160" height="1" fill="#a4a4a4"/><rect x="533" y="168" width="160" height="1" fill="#7c7c7c"/>
<rect x="533" y="183" width="24" height="1" fill="#a4a4a4"/><rect x="533" y="184" width="24" height="1" fill="#7c7c7c"/>
<rect x="667" y="183" width="26" height="1" fill="#a4a4a4"/><rect x="667" y="184" width="26" height="1" fill="#7c7c7c"/>
<rect x="667" y="199" width="26" height="1" fill="#a4a4a4"/><rect x="667" y="200" width="26" height="1" fill="#7c7c7c"/>
<rect x="773" y="167" width="192" height="1" fill="#a4a4a4"/><rect x="773" y="168" width="192" height="1" fill="#7c7c7c"/>
<rect x="773" y="183" width="24" height="1" fill="#a4a4a4"/><rect x="773" y="184" width="24" height="1" fill="#7c7c7c"/>
<rect x="938" y="183" width="27" height="1" fill="#a4a4a4"/><rect x="938" y="184" width="27" height="1" fill="#7c7c7c"/>
<rect x="938" y="199" width="27" height="1" fill="#a4a4a4"/><rect x="938" y="200" width="27" height="1" fill="#7c7c7c"/>
<rect x="1045" y="167" width="9" height="1" fill="#a4a4a4"/><rect x="1045" y="168" width="9" height="1" fill="#7c7c7c"/>
<rect x="1053" y="165" width="1" height="3" fill="#808080"/>
<rect x="1045" y="183" width="25" height="1" fill="#a4a4a4"/><rect x="1045" y="184" width="25" height="1" fill="#7c7c7c"/>
<rect x="300" y="151" width="1" height="1" fill="#000"/><rect x="316" y="151" width="1" height="1" fill="#000"/><rect x="348" y="151" width="1" height="1" fill="#000"/><rect x="364" y="151" width="1" height="1" fill="#000"/><rect x="380" y="151" width="1" height="1" fill="#000"/><rect x="396" y="151" width="1" height="1" fill="#000"/><rect x="412" y="151" width="1" height="1" fill="#000"/><rect x="428" y="151" width="1" height="1" fill="#000"/><rect x="444" y="151" width="1" height="1" fill="#000"/><rect x="540" y="151" width="1" height="1" fill="#000"/><rect x="556" y="151" width="1" height="1" fill="#000"/><rect x="572" y="151" width="1" height="1" fill="#000"/><rect x="588" y="151" width="1" height="1" fill="#000"/><rect x="604" y="151" width="1" height="1" fill="#000"/><rect x="620" y="151" width="1" height="1" fill="#000"/><rect x="636" y="151" width="1" height="1" fill="#000"/><rect x="652" y="151" width="1" height="1" fill="#000"/><rect x="668" y="151" width="1" height="1" fill="#000"/><rect x="684" y="151" width="1" height="1" fill="#000"/><rect x="780" y="151" width="1" height="1" fill="#000"/><rect x="796" y="151" width="1" height="1" fill="#000"/><rect x="812" y="151" width="1" height="1" fill="#000"/><rect x="828" y="151" width="1" height="1" fill="#000"/><rect x="844" y="151" width="1" height="1" fill="#000"/><rect x="860" y="151" width="1" height="1" fill="#000"/><rect x="876" y="151" width="1" height="1" fill="#000"/><rect x="892" y="151" width="1" height="1" fill="#000"/><rect x="908" y="151" width="1" height="1" fill="#000"/><rect x="924" y="151" width="1" height="1" fill="#000"/><rect x="940" y="151" width="1" height="1" fill="#000"/><rect x="956" y="151" width="1" height="1" fill="#000"/><rect x="1052" y="151" width="1" height="1" fill="#000"/><rect x="1068" y="151" width="1" height="1" fill="#000"/><rect x="1084" y="151" width="1" height="1" fill="#000"/><rect x="1100" y="151" width="1" height="1" fill="#000"/><rect x="1116" y="151" width="1" height="1" fill="#000"/><rect x="1132" y="151" width="1" height="1" fill="#000"/><rect x="1148" y="151" width="1" height="1" fill="#000"/>
<rect x="332" y="167" width="1" height="1" fill="#000"/><rect x="1068" y="167" width="1" height="1" fill="#000"/><rect x="1084" y="167" width="1" height="1" fill="#000"/><rect x="1100" y="167" width="1" height="1" fill="#000"/><rect x="1116" y="167" width="1" height="1" fill="#000"/><rect x="1132" y="167" width="1" height="1" fill="#000"/><rect x="1148" y="167" width="1" height="1" fill="#000"/>
<rect x="300" y="183" width="1" height="1" fill="#000"/><rect x="316" y="183" width="1" height="1" fill="#000"/><rect x="332" y="183" width="1" height="1" fill="#000"/><rect x="348" y="183" width="1" height="1" fill="#000"/><rect x="364" y="183" width="1" height="1" fill="#000"/><rect x="380" y="183" width="1" height="1" fill="#000"/><rect x="604" y="183" width="1" height="1" fill="#000"/><rect x="620" y="183" width="1" height="1" fill="#000"/><rect x="844" y="183" width="1" height="1" fill="#000"/><rect x="860" y="183" width="1" height="1" fill="#000"/><rect x="876" y="183" width="1" height="1" fill="#000"/><rect x="892" y="183" width="1" height="1" fill="#000"/><rect x="1116" y="183" width="1" height="1" fill="#000"/><rect x="1132" y="183" width="1" height="1" fill="#000"/><rect x="1148" y="183" width="1" height="1" fill="#000"/>
<rect x="300" y="199" width="1" height="1" fill="#000"/><rect x="316" y="199" width="1" height="1" fill="#000"/><rect x="332" y="199" width="1" height="1" fill="#000"/><rect x="348" y="199" width="1" height="1" fill="#000"/><rect x="364" y="199" width="1" height="1" fill="#000"/><rect x="540" y="199" width="1" height="1" fill="#000"/><rect x="556" y="199" width="1" height="1" fill="#000"/><rect x="572" y="199" width="1" height="1" fill="#000"/><rect x="588" y="199" width="1" height="1" fill="#000"/><rect x="604" y="199" width="1" height="1" fill="#000"/><rect x="620" y="199" width="1" height="1" fill="#000"/><rect x="780" y="199" width="1" height="1" fill="#000"/><rect x="796" y="199" width="1" height="1" fill="#000"/><rect x="812" y="199" width="1" height="1" fill="#000"/><rect x="828" y="199" width="1" height="1" fill="#000"/><rect x="844" y="199" width="1" height="1" fill="#000"/><rect x="860" y="199" width="1" height="1" fill="#000"/><rect x="876" y="199" width="1" height="1" fill="#000"/><rect x="892" y="199" width="1" height="1" fill="#000"/><rect x="1052" y="199" width="1" height="1" fill="#000"/><rect x="1068" y="199" width="1" height="1" fill="#000"/><rect x="1084" y="199" width="1" height="1" fill="#000"/><rect x="1100" y="199" width="1" height="1" fill="#000"/><rect x="1116" y="199" width="1" height="1" fill="#000"/><rect x="1132" y="199" width="1" height="1" fill="#000"/><rect x="1148" y="199" width="1" height="1" fill="#000"/>
<text x="322" y="156" fill="#ff00ff" font-size="13" text-anchor="start" font-family="Liberation Sans,Noto Sans CJK SC,sans-serif" >EN</text>
<text x="426" y="186.5" fill="#ff00ff" font-size="14" text-anchor="end" font-family="Liberation Sans,Noto Sans CJK SC,sans-serif" font-weight="400" letter-spacing="0.600">原值</text>
<text x="426" y="202.5" fill="#ff00ff" font-size="14" text-anchor="end" font-family="Liberation Sans,Noto Sans CJK SC,sans-serif" font-weight="400" letter-spacing="0.600">修正值</text>
<text x="558" y="188" fill="#ff00ff" font-size="13" text-anchor="start" font-family="Liberation Sans,Noto Sans CJK SC,sans-serif" >temp0</text>
<text x="629.5" y="188" fill="#ff00ff" font-size="13" text-anchor="start" font-family="Liberation Sans,Noto Sans CJK SC,sans-serif" >temp0</text>
<text x="667" y="202.5" fill="#ff00ff" font-size="14" text-anchor="end" font-family="Liberation Sans,Noto Sans CJK SC,sans-serif" font-weight="400" letter-spacing="0.600">分子</text>
<text x="798" y="188" fill="#ff00ff" font-size="13" text-anchor="start" font-family="Liberation Sans,Noto Sans CJK SC,sans-serif" >temp1</text>
<text x="901" y="188" fill="#ff00ff" font-size="13" text-anchor="start" font-family="Liberation Sans,Noto Sans CJK SC,sans-serif" >temp1</text>
<text x="938" y="202.5" fill="#ff00ff" font-size="14" text-anchor="end" font-family="Liberation Sans,Noto Sans CJK SC,sans-serif" font-weight="400" letter-spacing="0.600">分母</text>
<text x="1071" y="186.5" fill="#ff00ff" font-size="14" text-anchor="start" font-family="Liberation Sans,Noto Sans CJK SC,sans-serif" font-weight="400" letter-spacing="0.600">输出</text>
<text x="491.5" y="157" fill="#000" font-size="13" text-anchor="middle" font-family="Liberation Sans,Noto Sans CJK SC,sans-serif" >ADD_E</text>
<text x="458.5" y="171.5" fill="#000" font-size="13" text-anchor="start" font-family="Liberation Sans,Noto Sans CJK SC,sans-serif" >EN</text>
<text x="525.5" y="171.5" fill="#000" font-size="13" text-anchor="end" font-family="Liberation Sans,Noto Sans CJK SC,sans-serif" >ENO</text>
<text x="458" y="187.5" fill="#000" font-size="13" text-anchor="start" font-family="Liberation Sans,Noto Sans CJK SC,sans-serif" >_IN</text>
<text x="458" y="203.5" fill="#000" font-size="13" text-anchor="start" font-family="Liberation Sans,Noto Sans CJK SC,sans-serif" >_IN</text>
<text x="731.5" y="157" fill="#000" font-size="13" text-anchor="middle" font-family="Liberation Sans,Noto Sans CJK SC,sans-serif" >MUL_E</text>
<text x="698.5" y="171.5" fill="#000" font-size="13" text-anchor="start" font-family="Liberation Sans,Noto Sans CJK SC,sans-serif" >EN</text>
<text x="765.5" y="171.5" fill="#000" font-size="13" text-anchor="end" font-family="Liberation Sans,Noto Sans CJK SC,sans-serif" >ENO</text>
<text x="698" y="187.5" fill="#000" font-size="13" text-anchor="start" font-family="Liberation Sans,Noto Sans CJK SC,sans-serif" >_IN</text>
<text x="698" y="203.5" fill="#000" font-size="13" text-anchor="start" font-family="Liberation Sans,Noto Sans CJK SC,sans-serif" >_IN</text>
<text x="1003.5" y="157" fill="#000" font-size="13" text-anchor="middle" font-family="Liberation Sans,Noto Sans CJK SC,sans-serif" >DIV_E</text>
<text x="970.5" y="171.5" fill="#000" font-size="13" text-anchor="start" font-family="Liberation Sans,Noto Sans CJK SC,sans-serif" >EN</text>
<text x="1037.5" y="171.5" fill="#000" font-size="13" text-anchor="end" font-family="Liberation Sans,Noto Sans CJK SC,sans-serif" >ENO</text>
<text x="970" y="187.5" fill="#000" font-size="13" text-anchor="start" font-family="Liberation Sans,Noto Sans CJK SC,sans-serif" >_IN1</text>
<text x="970" y="203.5" fill="#000" font-size="13" text-anchor="start" font-family="Liberation Sans,Noto Sans CJK SC,sans-serif" >_IN2</text>
</svg>
<div class="t" style="left:193px;top:138px;color:#f4f8ff;font-size:11px">1</div>
<div class="a" style="left:1161px;top:134px;width:17px;height:379px;background:#fff;background-image:repeating-conic-gradient(#e8e8e8 0 25%,#fff 0 50%);background-size:2px 2px"></div>
<div class="a" style="left:1161px;top:134px;width:17px;height:5px;background:#000"></div>
<div class="a" style="left:1161px;top:139px;width:17px;height:17px;background:#f0f0f0;border:1px solid #fff;border-right-color:#696969;border-bottom-color:#696969;box-shadow:inset -1px -1px 0 #a0a0a0"></div><svg style="left:0;top:0" width="1" height="1"><path d="M1169 144.5l4 4h-8z" fill="#000"/></svg>
<div class="a" style="left:1161px;top:156px;width:17px;height:277px;background:#f0f0f0;border:1px solid #fff;border-right-color:#696969;border-bottom-color:#696969;box-shadow:inset -1px -1px 0 #a0a0a0"></div>
<div class="a" style="left:1161px;top:496px;width:17px;height:17px;background:#f0f0f0;border:1px solid #fff;border-right-color:#696969;border-bottom-color:#696969;box-shadow:inset -1px -1px 0 #a0a0a0"></div><svg style="left:0;top:0" width="1" height="1"><path d="M1169 506l-4 -4h8z" fill="#000"/></svg>
<div class="a" style="left:188px;top:513px;width:973px;height:17px;background:#fff;background-image:repeating-conic-gradient(#e8e8e8 0 25%,#fff 0 50%);background-size:2px 2px"></div>
<div class="a" style="left:188px;top:513px;width:17px;height:17px;background:#f0f0f0;border:1px solid #fff;border-right-color:#696969;border-bottom-color:#696969;box-shadow:inset -1px -1px 0 #a0a0a0"></div><svg style="left:0;top:0" width="1" height="1"><path d="M193.5 521l4 -4v8z" fill="#000"/></svg>
<div class="a" style="left:205px;top:513px;width:111px;height:17px;background:#f0f0f0;border:1px solid #fff;border-right-color:#696969;border-bottom-color:#696969;box-shadow:inset -1px -1px 0 #a0a0a0"></div>
<div class="a" style="left:1144px;top:513px;width:17px;height:17px;background:#f0f0f0;border:1px solid #fff;border-right-color:#696969;border-bottom-color:#696969;box-shadow:inset -1px -1px 0 #a0a0a0"></div><svg style="left:0;top:0" width="1" height="1"><path d="M1154 521l-4 -4v8z" fill="#000"/></svg>
<div class="a" style="left:1161px;top:513px;width:17px;height:17px;background:#fff"></div>
<!-- parts -->
<div class="ph" style="left:1187px;top:107px;width:179px"><div class="pgrip"></div><div class="t" style="left:14px;top:6px">部件选择</div>
<svg style="left:146px;top:5px" width="28" height="14" viewBox="0 0 28 14"><path d="M4.500 2.500h4v4.500h-4zM7.500 2.500v4.500M3 7.500h7M6.500 8v3" stroke="#000" stroke-width="1" fill="none"/><path d="M18.300 3.400l6.700 6.200M25 3.400l-6.700 6.200" stroke="#000" stroke-width="1.900"/></svg></div>
<div class="a" style="left:1186px;top:133px;width:180px;height:400px;background:#e6e6f0;border:1px solid #a0a0a0;border-right:0"></div>
<div class="a" style="left:1187px;top:134px;width:178px;height:19px;background:#fff;border:1px solid #7a7a7a;border-right-color:#d0d0d0;border-bottom-color:#d0d0d0"></div>
<div class="t" style="left:1190px;top:137px">所有部件</div>
<div class="a" style="left:1347px;top:136px;width:16px;height:16px;background:#f0f0f0;border:1px solid #fff;border-right-color:#696969;border-bottom-color:#696969"></div>
<div class="a" style="left:1351px;top:142px;width:0;height:0;border:4px solid transparent;border-top:4px solid #000;border-bottom:0"></div>
<div class="a" style="left:1188px;top:156px;width:177px;height:376px;background:#fff;border-top:1px solid #696969;border-left:1px solid #696969;overflow:hidden">
<div class="a" style="left:8px;top:0;width:1px;height:360px;background:repeating-linear-gradient(180deg,#808080 0,#808080 1px,transparent 1px,transparent 2px)"></div>
<div class="a" style="left:27px;top:0;width:1px;height:360px;background:repeating-linear-gradient(180deg,#808080 0,#808080 1px,transparent 1px,transparent 2px)"></div>
<div class="a" style="left:55px;top:2px;width:35px;height:15px;background:#f0f0f0"></div>
<div class="a" style="left:28px;top:9px;width:10px;height:1px;background:repeating-linear-gradient(90deg,#808080 0,#808080 1px,transparent 1px,transparent 2px)"></div>
<svg style="left:41px;top:3px" width="11" height="13" viewBox="0 0 11 13"><path d="M0.500 0.500h6.500l3 3v9h-9.500z" fill="#fff" stroke="#0000e0" stroke-width="1"/><path d="M2.500 4.500h3M2.500 7h5M2.500 9.500h5" stroke="#0000e0" stroke-width="1.100"/></svg>
<div class="t" style="left:57px;top:2px;font-size:11px;transform:scaleX(0.910);transform-origin:left center">DIV_E</div>
<div class="a" style="left:28px;top:25px;width:10px;height:1px;background:repeating-linear-gradient(90deg,#808080 0,#808080 1px,transparent 1px,transparent 2px)"></div>
<svg style="left:41px;top:19px" width="11" height="13" viewBox="0 0 11 13"><path d="M0.500 0.500h6.500l3 3v9h-9.500z" fill="#fff" stroke="#0000e0" stroke-width="1"/><path d="M2.500 4.500h3M2.500 7h5M2.500 9.500h5" stroke="#0000e0" stroke-width="1.100"/></svg>
<div class="t" style="left:57px;top:18px;font-size:11px;transform:scaleX(0.910);transform-origin:left center">DIV_TIME</div>
<div class="a" style="left:28px;top:41px;width:10px;height:1px;background:repeating-linear-gradient(90deg,#808080 0,#808080 1px,transparent 1px,transparent 2px)"></div>
<svg style="left:41px;top:35px" width="11" height="13" viewBox="0 0 11 13"><path d="M0.500 0.500h6.500l3 3v9h-9.500z" fill="#fff" stroke="#0000e0" stroke-width="1"/><path d="M2.500 4.500h3M2.500 7h5M2.500 9.500h5" stroke="#0000e0" stroke-width="1.100"/></svg>
<div class="t" style="left:57px;top:34px;font-size:11px;transform:scaleX(0.910);transform-origin:left center">DIV_TIME_E</div>
<div class="a" style="left:28px;top:57px;width:10px;height:1px;background:repeating-linear-gradient(90deg,#808080 0,#808080 1px,transparent 1px,transparent 2px)"></div>
<svg style="left:41px;top:51px" width="11" height="13" viewBox="0 0 11 13"><path d="M0.500 0.500h6.500l3 3v9h-9.500z" fill="#fff" stroke="#0000e0" stroke-width="1"/><path d="M2.500 4.500h3M2.500 7h5M2.500 9.500h5" stroke="#0000e0" stroke-width="1.100"/></svg>
<div class="t" style="left:57px;top:50px;font-size:11px;transform:scaleX(0.910);transform-origin:left center">DMEAN</div>
<div class="a" style="left:28px;top:73px;width:10px;height:1px;background:repeating-linear-gradient(90deg,#808080 0,#808080 1px,transparent 1px,transparent 2px)"></div>
<svg style="left:41px;top:67px" width="11" height="13" viewBox="0 0 11 13"><path d="M0.500 0.500h6.500l3 3v9h-9.500z" fill="#fff" stroke="#0000e0" stroke-width="1"/><path d="M2.500 4.500h3M2.500 7h5M2.500 9.500h5" stroke="#0000e0" stroke-width="1.100"/></svg>
<div class="t" style="left:57px;top:66px;font-size:11px;transform:scaleX(0.910);transform-origin:left center">DMEANP</div>
<div class="a" style="left:28px;top:89px;width:10px;height:1px;background:repeating-linear-gradient(90deg,#808080 0,#808080 1px,transparent 1px,transparent 2px)"></div>
<svg style="left:41px;top:83px" width="11" height="13" viewBox="0 0 11 13"><path d="M0.500 0.500h6.500l3 3v9h-9.500z" fill="#fff" stroke="#0000e0" stroke-width="1"/><path d="M2.500 4.500h3M2.500 7h5M2.500 9.500h5" stroke="#0000e0" stroke-width="1.100"/></svg>
<div class="t" style="left:57px;top:82px;font-size:11px;transform:scaleX(0.910);transform-origin:left center">DMOV</div>
<div class="a" style="left:28px;top:105px;width:10px;height:1px;background:repeating-linear-gradient(90deg,#808080 0,#808080 1px,transparent 1px,transparent 2px)"></div>
<svg style="left:41px;top:99px" width="11" height="13" viewBox="0 0 11 13"><path d="M0.500 0.500h6.500l3 3v9h-9.500z" fill="#fff" stroke="#0000e0" stroke-width="1"/><path d="M2.500 4.500h3M2.500 7h5M2.500 9.500h5" stroke="#0000e0" stroke-width="1.100"/></svg>
<div class="t" style="left:57px;top:98px;font-size:11px;transform:scaleX(0.910);transform-origin:left center">DMOVP</div>
<div class="a" style="left:28px;top:121px;width:10px;height:1px;background:repeating-linear-gradient(90deg,#808080 0,#808080 1px,transparent 1px,transparent 2px)"></div>
<svg style="left:41px;top:115px" width="11" height="13" viewBox="0 0 11 13"><path d="M0.500 0.500h6.500l3 3v9h-9.500z" fill="#fff" stroke="#0000e0" stroke-width="1"/><path d="M2.500 4.500h3M2.500 7h5M2.500 9.500h5" stroke="#0000e0" stroke-width="1.100"/></svg>
<div class="t" style="left:57px;top:114px;font-size:11px;transform:scaleX(0.910);transform-origin:left center">DMUL</div>
<div class="a" style="left:28px;top:137px;width:10px;height:1px;background:repeating-linear-gradient(90deg,#808080 0,#808080 1px,transparent 1px,transparent 2px)"></div>
<svg style="left:41px;top:131px" width="11" height="13" viewBox="0 0 11 13"><path d="M0.500 0.500h6.500l3 3v9h-9.500z" fill="#fff" stroke="#0000e0" stroke-width="1"/><path d="M2.500 4.500h3M2.500 7h5M2.500 9.500h5" stroke="#0000e0" stroke-width="1.100"/></svg>
<div class="t" style="left:57px;top:130px;font-size:11px;transform:scaleX(0.910);transform-origin:left center">DMULP</div>
<div class="a" style="left:28px;top:153px;width:10px;height:1px;background:repeating-linear-gradient(90deg,#808080 0,#808080 1px,transparent 1px,transparent 2px)"></div>
<svg style="left:41px;top:147px" width="11" height="13" viewBox="0 0 11 13"><path d="M0.500 0.500h6.500l3 3v9h-9.500z" fill="#fff" stroke="#0000e0" stroke-width="1"/><path d="M2.500 4.500h3M2.500 7h5M2.500 9.500h5" stroke="#0000e0" stroke-width="1.100"/></svg>
<div class="t" style="left:57px;top:146px;font-size:11px;transform:scaleX(0.910);transform-origin:left center">DNEG</div>
<div class="a" style="left:28px;top:169px;width:10px;height:1px;background:repeating-linear-gradient(90deg,#808080 0,#808080 1px,transparent 1px,transparent 2px)"></div>
<svg style="left:41px;top:163px" width="11" height="13" viewBox="0 0 11 13"><path d="M0.500 0.500h6.500l3 3v9h-9.500z" fill="#fff" stroke="#0000e0" stroke-width="1"/><path d="M2.500 4.500h3M2.500 7h5M2.500 9.500h5" stroke="#0000e0" stroke-width="1.100"/></svg>
<div class="t" style="left:57px;top:162px;font-size:11px;transform:scaleX(0.910);transform-origin:left center">DNEGP</div>
<div class="a" style="left:28px;top:185px;width:10px;height:1px;background:repeating-linear-gradient(90deg,#808080 0,#808080 1px,transparent 1px,transparent 2px)"></div>
<svg style="left:41px;top:179px" width="11" height="13" viewBox="0 0 11 13"><path d="M0.500 0.500h6.500l3 3v9h-9.500z" fill="#fff" stroke="#0000e0" stroke-width="1"/><path d="M2.500 4.500h3M2.500 7h5M2.500 9.500h5" stroke="#0000e0" stroke-width="1.100"/></svg>
<div class="t" style="left:57px;top:178px;font-size:11px;transform:scaleX(0.910);transform-origin:left center">DOR</div>
<div class="a" style="left:28px;top:201px;width:10px;height:1px;background:repeating-linear-gradient(90deg,#808080 0,#808080 1px,transparent 1px,transparent 2px)"></div>
<svg style="left:41px;top:195px" width="11" height="13" viewBox="0 0 11 13"><path d="M0.500 0.500h6.500l3 3v9h-9.500z" fill="#fff" stroke="#0000e0" stroke-width="1"/><path d="M2.500 4.500h3M2.500 7h5M2.500 9.500h5" stroke="#0000e0" stroke-width="1.100"/></svg>
<div class="t" style="left:57px;top:194px;font-size:11px;transform:scaleX(0.910);transform-origin:left center">DORP</div>
<div class="a" style="left:28px;top:217px;width:10px;height:1px;background:repeating-linear-gradient(90deg,#808080 0,#808080 1px,transparent 1px,transparent 2px)"></div>
<svg style="left:41px;top:211px" width="11" height="13" viewBox="0 0 11 13"><path d="M0.500 0.500h6.500l3 3v9h-9.500z" fill="#fff" stroke="#0000e0" stroke-width="1"/><path d="M2.500 4.500h3M2.500 7h5M2.500 9.500h5" stroke="#0000e0" stroke-width="1.100"/></svg>
<div class="t" style="left:57px;top:210px;font-size:11px;transform:scaleX(0.910);transform-origin:left center">DPLSR</div>
<div class="a" style="left:28px;top:233px;width:10px;height:1px;background:repeating-linear-gradient(90deg,#808080 0,#808080 1px,transparent 1px,transparent 2px)"></div>
<svg style="left:41px;top:227px" width="11" height="13" viewBox="0 0 11 13"><path d="M0.500 0.500h6.500l3 3v9h-9.500z" fill="#fff" stroke="#0000e0" stroke-width="1"/><path d="M2.500 4.500h3M2.500 7h5M2.500 9.500h5" stroke="#0000e0" stroke-width="1.100"/></svg>
<div class="t" style="left:57px;top:226px;font-size:11px;transform:scaleX(0.910);transform-origin:left center">DPLSY</div>
<div class="a" style="left:28px;top:249px;width:10px;height:1px;background:repeating-linear-gradient(90deg,#808080 0,#808080 1px,transparent 1px,transparent 2px)"></div>
<svg style="left:41px;top:243px" width="11" height="13" viewBox="0 0 11 13"><path d="M0.500 0.500h6.500l3 3v9h-9.500z" fill="#fff" stroke="#0000e0" stroke-width="1"/><path d="M2.500 4.500h3M2.500 7h5M2.500 9.500h5" stroke="#0000e0" stroke-width="1.100"/></svg>
<div class="t" style="left:57px;top:242px;font-size:11px;transform:scaleX(0.910);transform-origin:left center">DPRUN</div>
<div class="a" style="left:28px;top:265px;width:10px;height:1px;background:repeating-linear-gradient(90deg,#808080 0,#808080 1px,transparent 1px,transparent 2px)"></div>
<svg style="left:41px;top:259px" width="11" height="13" viewBox="0 0 11 13"><path d="M0.500 0.500h6.500l3 3v9h-9.500z" fill="#fff" stroke="#0000e0" stroke-width="1"/><path d="M2.500 4.500h3M2.500 7h5M2.500 9.500h5" stroke="#0000e0" stroke-width="1.100"/></svg>
<div class="t" style="left:57px;top:258px;font-size:11px;transform:scaleX(0.910);transform-origin:left center">DPRUNP</div>
<div class="a" style="left:28px;top:281px;width:10px;height:1px;background:repeating-linear-gradient(90deg,#808080 0,#808080 1px,transparent 1px,transparent 2px)"></div>
<svg style="left:41px;top:275px" width="11" height="13" viewBox="0 0 11 13"><path d="M0.500 0.500h6.500l3 3v9h-9.500z" fill="#fff" stroke="#0000e0" stroke-width="1"/><path d="M2.500 4.500h3M2.500 7h5M2.500 9.500h5" stroke="#0000e0" stroke-width="1.100"/></svg>
<div class="t" style="left:57px;top:274px;font-size:11px;transform:scaleX(0.910);transform-origin:left center">DRCL</div>
<div class="a" style="left:28px;top:297px;width:10px;height:1px;background:repeating-linear-gradient(90deg,#808080 0,#808080 1px,transparent 1px,transparent 2px)"></div>
<svg style="left:41px;top:291px" width="11" height="13" viewBox="0 0 11 13"><path d="M0.500 0.500h6.500l3 3v9h-9.500z" fill="#fff" stroke="#0000e0" stroke-width="1"/><path d="M2.500 4.500h3M2.500 7h5M2.500 9.500h5" stroke="#0000e0" stroke-width="1.100"/></svg>
<div class="t" style="left:57px;top:290px;font-size:11px;transform:scaleX(0.910);transform-origin:left center">DRCLP</div>
<div class="a" style="left:28px;top:313px;width:10px;height:1px;background:repeating-linear-gradient(90deg,#808080 0,#808080 1px,transparent 1px,transparent 2px)"></div>
<svg style="left:41px;top:307px" width="11" height="13" viewBox="0 0 11 13"><path d="M0.500 0.500h6.500l3 3v9h-9.500z" fill="#fff" stroke="#0000e0" stroke-width="1"/><path d="M2.500 4.500h3M2.500 7h5M2.500 9.500h5" stroke="#0000e0" stroke-width="1.100"/></svg>
<div class="t" style="left:57px;top:306px;font-size:11px;transform:scaleX(0.910);transform-origin:left center">DRCR</div>
<div class="a" style="left:28px;top:329px;width:10px;height:1px;background:repeating-linear-gradient(90deg,#808080 0,#808080 1px,transparent 1px,transparent 2px)"></div>
<svg style="left:41px;top:323px" width="11" height="13" viewBox="0 0 11 13"><path d="M0.500 0.500h6.500l3 3v9h-9.500z" fill="#fff" stroke="#0000e0" stroke-width="1"/><path d="M2.500 4.500h3M2.500 7h5M2.500 9.500h5" stroke="#0000e0" stroke-width="1.100"/></svg>
<div class="t" style="left:57px;top:322px;font-size:11px;transform:scaleX(0.910);transform-origin:left center">DRCRP</div>
<div class="a" style="left:28px;top:345px;width:10px;height:1px;background:repeating-linear-gradient(90deg,#808080 0,#808080 1px,transparent 1px,transparent 2px)"></div>
<svg style="left:41px;top:339px" width="11" height="13" viewBox="0 0 11 13"><path d="M0.500 0.500h6.500l3 3v9h-9.500z" fill="#fff" stroke="#0000e0" stroke-width="1"/><path d="M2.500 4.500h3M2.500 7h5M2.500 9.500h5" stroke="#0000e0" stroke-width="1.100"/></svg>
<div class="t" style="left:57px;top:338px;font-size:11px;transform:scaleX(0.910);transform-origin:left center">DROL</div>
<div class="a" style="left:28px;top:361px;width:10px;height:1px;background:repeating-linear-gradient(90deg,#808080 0,#808080 1px,transparent 1px,transparent 2px)"></div>
<svg style="left:41px;top:355px" width="11" height="13" viewBox="0 0 11 13"><path d="M0.500 0.500h6.500l3 3v9h-9.500z" fill="#fff" stroke="#0000e0" stroke-width="1"/><path d="M2.500 4.500h3M2.500 7h5M2.500 9.500h5" stroke="#0000e0" stroke-width="1.100"/></svg>
<div class="t" style="left:57px;top:354px;font-size:11px;transform:scaleX(0.910);transform-origin:left center">DROLP</div>
<div class="a" style="left:159px;top:0;width:17px;height:359px;background:#f0f0f0"></div>
<div class="a" style="left:159px;top:123px;width:17px;height:17px;background:#cdcdcd"></div>
<svg style="left:159px;top:0" width="17" height="359" viewBox="0 0 17 359"><path d="M5 12l3.500-3.500l3.500 3.500M5 348l3.500 3.500l3.500-3.500" stroke="#505050" stroke-width="1.600" fill="none"/></svg>
<div class="a" style="left:0;top:358px;width:177px;height:17px;background:#f0f0f0"></div>
<div class="a" style="left:16px;top:358px;width:117px;height:17px;background:#cdcdcd"></div>
<svg style="left:0;top:358px" width="177" height="17" viewBox="0 0 177 17"><path d="M10.500 5l-3.500 3.500l3.500 3.500M147 5l3.500 3.500l-3.500 3.500" stroke="#505050" stroke-width="1.600" fill="none"/></svg>
</div>
<!-- output -->
<div class="ph" style="left:0;top:538px;width:766px;height:26px"><div class="pgrip"></div><div class="t" style="left:14px;top:8px">输出</div>
<svg style="left:733px;top:6px" width="28" height="14" viewBox="0 0 28 14"><path d="M4.500 2.500h4v4.500h-4zM7.500 2.500v4.500M3 7.500h7M6.500 8v3" stroke="#000" stroke-width="1" fill="none"/><path d="M18.300 3.400l6.700 6.200M25 3.400l-6.700 6.200" stroke="#000" stroke-width="1.900"/></svg></div>
<div class="a" style="left:0;top:565px;width:766px;height:128px;background:#3a62b4"></div>
<div class="a" style="left:1px;top:566px;width:764px;height:126px;background:#ffc266"></div>
<div class="a" style="left:2px;top:567px;width:762px;height:124px;background:#f0f0f0"></div>
<div class="a" style="left:5px;top:570px;width:755px;height:18px;background:#f0f0f0;border:1px solid #a0a0a0;border-right-color:#fff;border-bottom-color:#fff"></div>
<div class="t" style="left:5px;top:572px;font-family:'Liberation Mono','Noto Sans CJK SC',monospace;font-size:12px">全部编译</div>
<div class="a" style="left:5px;top:591px;width:756px;height:75px;border:1px solid #696969;border-right-color:#e3e3e3;border-bottom-color:#e3e3e3;background:#ababab"></div>
<div class="a" style="left:6px;top:592px;width:754px;height:16px;background:#f0f0f0;border-bottom:1px solid #696969;border-top:1px solid #a0a0a0"></div>
<div class="a" style="left:6px;top:608px;width:754px;height:15px;background:#f0f0f0"></div>
<div class="a" style="left:6px;top:623px;width:754px;height:15px;background:#fff"></div>
<div class="a" style="left:36px;top:593px;width:1px;height:14px;background:#a0a0a0"></div>
<div class="a" style="left:36px;top:608px;width:1px;height:30px;background:#e0e0e0"></div>
<div class="a" style="left:116px;top:593px;width:1px;height:14px;background:#a0a0a0"></div>
<div class="a" style="left:116px;top:608px;width:1px;height:30px;background:#e0e0e0"></div>
<div class="a" style="left:266px;top:593px;width:1px;height:14px;background:#a0a0a0"></div>
<div class="a" style="left:266px;top:608px;width:1px;height:30px;background:#e0e0e0"></div>
<div class="a" style="left:416px;top:593px;width:1px;height:14px;background:#a0a0a0"></div>
<div class="a" style="left:416px;top:608px;width:1px;height:30px;background:#e0e0e0"></div>
<div class="t" style="left:15px;top:594px;font-family:'Liberation Mono','Noto Sans CJK SC',monospace;font-size:10px;line-height:14px">No.</div>
<div class="t" style="left:39px;top:594px;font-family:'Liberation Mono','Noto Sans CJK SC',monospace;font-size:10px;line-height:14px"><span style="font-size:12px">结果</span></div>
<div class="t" style="left:119px;top:594px;font-family:'Liberation Mono','Noto Sans CJK SC',monospace;font-size:10px;line-height:14px"><span style="font-size:12px">数据名</span></div>
<div class="t" style="left:269px;top:594px;font-family:'Liberation Mono','Noto Sans CJK SC',monospace;font-size:10px;line-height:14px"><span style="font-size:12px">分类</span></div>
<div class="t" style="left:419px;top:594px;font-family:'Liberation Mono','Noto Sans CJK SC',monospace;font-size:10px;line-height:14px"><span style="font-size:12px">内容</span></div>
<div class="t" style="left:0px;top:609px;width:33px;text-align:right;font-family:'Liberation Mono','Noto Sans CJK SC',monospace;font-size:10px;line-height:14px">1</div>
<div class="t" style="left:39px;top:609px;font-family:'Liberation Mono','Noto Sans CJK SC',monospace;font-size:10px;line-height:14px">Error</div>
<div class="t" style="left:119px;top:609px;font-family:'Liberation Mono','Noto Sans CJK SC',monospace;font-size:10px;line-height:14px">POU_01</div>
<div class="t" style="left:269px;top:609px;font-family:'Liberation Mono','Noto Sans CJK SC',monospace;font-size:10px;line-height:14px"><span style="font-size:12px">编译程序</span></div>
<div class="t" style="left:419px;top:609px;font-family:'Liberation Mono','Noto Sans CJK SC',monospace;font-size:10px;line-height:14px"><span style="font-size:12px">输入变量</span>'<span style="font-size:12px">原值</span>'<span style="font-size:12px">的数据类型不正确。</span>(<span style="font-size:12px">梯形图块</span>No.1)</div>
<div class="t" style="left:0px;top:624px;width:33px;text-align:right;font-family:'Liberation Mono','Noto Sans CJK SC',monospace;font-size:10px;line-height:14px">2</div>
<div class="t" style="left:39px;top:624px;font-family:'Liberation Mono','Noto Sans CJK SC',monospace;font-size:10px;line-height:14px">Error</div>
<div class="t" style="left:119px;top:624px;font-family:'Liberation Mono','Noto Sans CJK SC',monospace;font-size:10px;line-height:14px">POU_01</div>
<div class="t" style="left:269px;top:624px;font-family:'Liberation Mono','Noto Sans CJK SC',monospace;font-size:10px;line-height:14px"><span style="font-size:12px">编译程序</span></div>
<div class="t" style="left:419px;top:624px;font-family:'Liberation Mono','Noto Sans CJK SC',monospace;font-size:10px;line-height:14px"><span style="font-size:12px">输出变量的类型不一致。</span>(<span style="font-size:12px">梯形图块</span>No.1)</div>
<div class="a" style="left:6px;top:647px;width:754px;height:18px;background:#f0f0f0"></div>
<div class="a" style="left:24px;top:648px;width:514px;height:16px;background:#cdcdcd"></div>
<svg style="left:6px;top:647px" width="754" height="18" viewBox="0 0 754 18"><path d="M10.500 5.500l-3.500 3.500l3.500 3.500M743 5.500l3.500 3.500l-3.500 3.500" stroke="#505050" stroke-width="1.600" fill="none"/></svg>
<div class="a" style="left:5px;top:670px;width:755px;height:18px;background:#f0f0f0;border:1px solid #a0a0a0;border-right-color:#fff;border-bottom-color:#fff"></div>
<div class="t" style="left:5px;top:671px;font-family:'Liberation Mono','Noto Sans CJK SC',monospace;font-size:10px;line-height:14px"><span style="font-size:12px">已完成全部编译。</span>Error: 2, Warning: 0, CheckWarning: 0</div>
<div class="a" style="left:0;top:692px;width:767px;height:24px;background:linear-gradient(180deg,#f7f7fb,#ececf4)"></div>
<svg style="left:0;top:690px" width="200" height="28" viewBox="0 0 200 28"><defs><linearGradient id="gb" x1="0" y1="1" x2="0" y2="0"><stop offset="0" stop-color="#fff8e8"/><stop offset="0.500" stop-color="#ffe0b0"/><stop offset="1" stop-color="#ffc070"/></linearGradient><linearGradient id="gb2" x1="0" y1="1" x2="0" y2="0"><stop offset="0" stop-color="#fbfbfe"/><stop offset="1" stop-color="#dcdcea"/></linearGradient></defs>
<path d="M83.500 2.500V21Q83.500 24.500 87 24.500H166Q170 24.500 170 21V2.500z" fill="url(#gb2)" stroke="#2450b8"/>
<path d="M3 1.500L24 22Q27 24.500 31 24.500H78Q82 24.500 82 21V1.500z" fill="url(#gb)" stroke="#2450b8"/><path d="M2 1.500h81" stroke="#f7a94e" stroke-width="2"/>
</svg>
<svg style="left:31px;top:694px" width="16" height="16" viewBox="0 0 16 16"><rect x="0.500" y="1.500" width="15" height="12.500" fill="#fff" stroke="#445" stroke-width="1"/><rect x="1" y="2" width="14" height="3" fill="#1e5ee0"/><path d="M2.500 7.500h11M2.500 11.500h11" stroke="#999" stroke-width="0.900"/><path d="M2.500 9.500h11" stroke="#2a6af0" stroke-width="0.900"/></svg>
<div class="t" style="left:50px;top:696px;font-weight:bold">输出</div>
<svg style="left:91px;top:694px" width="16" height="16" viewBox="0 0 16 16"><rect x="1" y="0.5" width="14" height="6.5" fill="#0a5be0"/><text x="1.8" y="6.3" font-family="Liberation Sans,sans-serif" font-size="7.8" font-weight="bold" fill="#fff" textLength="12.4" lengthAdjust="spacingAndGlyphs">Dev</text><path d="M1 8.500h6l-1.500 2.500l1.500 2.500h-6z" fill="#0a5be0"/><path d="M8 7.5h2v1.500h1v6.500h-3.500v-5.500z M12.5 7.5h2l0.500 2.500v5.500h-3.500v-6.500h1z" fill="#141414"/><path d="M10.3 10h1.600v2h-1.600z" fill="#141414"/><path d="M8.2 11.5v4M12.7 11.5v4" stroke="#6a6a6a" stroke-width="0.700"/></svg>
<div class="t" style="left:110px;top:696px">交叉参照</div>
<!-- watch -->
<div class="ph" style="left:771px;top:538px;width:595px;height:26px"><div class="pgrip"></div><div class="t" style="left:13px;top:7px">监看1</div>
<svg style="left:561px;top:6px" width="28" height="14" viewBox="0 0 28 14"><path d="M4.500 2.500h4v4.500h-4zM7.500 2.500v4.500M3 7.500h7M6.500 8v3" stroke="#000" stroke-width="1" fill="none"/><path d="M18.300 3.400l6.700 6.200M25 3.400l-6.700 6.200" stroke="#000" stroke-width="1.900"/></svg></div>
<div class="a" style="left:770px;top:565px;width:596px;height:153px;background:#fff;border:1px solid #a0a0a0;border-right:0;border-bottom-color:#fff"></div><div class="a" style="left:771px;top:566px;width:595px;height:151px;background:#fff;border:1px solid #696969;border-right:0;border-bottom-color:#e3e3e3"></div>
<div class="a" style="left:772px;top:567px;width:594px;height:16px;background:#f0f0f0;border-top:1px solid #fff;border-bottom:1px solid #696969;box-shadow:inset 0 -1px 0 #a0a0a0"></div>
<div class="t" style="left:778px;top:569px;font-family:'Liberation Mono','Noto Sans CJK SC',monospace;font-size:12px">软元件<span style="font-size:10px">/</span>标签</div>
<div class="t" style="left:878px;top:569px;font-family:'Liberation Mono','Noto Sans CJK SC',monospace;font-size:12px">当前值</div>
<div class="a" style="left:870px;top:568px;width:2px;height:14px;background:#8a8a8a"></div>
<div class="a" style="left:872px;top:584px;width:1px;height:115px;background:#ececec"></div>
<div class="t" style="left:958px;top:569px;font-family:'Liberation Mono','Noto Sans CJK SC',monospace;font-size:12px">数据类型</div>
<div class="a" style="left:950px;top:568px;width:2px;height:14px;background:#8a8a8a"></div>
<div class="a" style="left:952px;top:584px;width:1px;height:115px;background:#ececec"></div>
<div class="t" style="left:1168px;top:569px;font-family:'Liberation Mono','Noto Sans CJK SC',monospace;font-size:12px">类</div>
<div class="a" style="left:1160px;top:568px;width:2px;height:14px;background:#8a8a8a"></div>
<div class="a" style="left:1162px;top:584px;width:1px;height:115px;background:#ececec"></div>
<div class="t" style="left:1248px;top:569px;font-family:'Liberation Mono','Noto Sans CJK SC',monospace;font-size:12px">软元件</div>
<div class="a" style="left:1240px;top:568px;width:2px;height:14px;background:#8a8a8a"></div>
<div class="a" style="left:1242px;top:584px;width:1px;height:115px;background:#ececec"></div>
<div class="t" style="left:1348px;top:569px;font-family:'Liberation Mono','Noto Sans CJK SC',monospace;font-size:12px">地址</div>
<div class="a" style="left:1340px;top:568px;width:2px;height:14px;background:#8a8a8a"></div>
<div class="a" style="left:1342px;top:584px;width:1px;height:115px;background:#ececec"></div>
<div class="a" style="left:772px;top:601px;width:594px;height:1px;background:#ececec"></div>
<div class="a" style="left:772px;top:618px;width:594px;height:1px;background:#ececec"></div>
<div class="a" style="left:772px;top:635px;width:594px;height:1px;background:#ececec"></div>
<div class="a" style="left:772px;top:652px;width:594px;height:1px;background:#ececec"></div>
<div class="a" style="left:772px;top:669px;width:594px;height:1px;background:#ececec"></div>
<div class="a" style="left:772px;top:686px;width:594px;height:1px;background:#ececec"></div>
<div class="a" style="left:772px;top:703px;width:594px;height:1px;background:#ececec"></div>
<div class="a" style="left:772px;top:699px;width:594px;height:17px;background:#f0f0f0"></div>
<div class="a" style="left:789px;top:700px;width:428px;height:15px;background:#cdcdcd"></div>
<svg style="left:772px;top:699px" width="594" height="17" viewBox="0 0 594 17"><path d="M10.500 5l-3.500 3.500l3.500 3.500M581 5l3.500 3.500l-3.500 3.500" stroke="#505050" stroke-width="1.600" fill="none"/></svg>
<!-- status -->
<div class="a" style="left:0;top:718px;width:1366px;height:20px;background:#f0f0f0;border-top:1px solid #d7d7d7"></div>
<div class="a" style="left:317px;top:721px;width:1px;height:16px;background:#c4c4c4;box-shadow:1px 0 0 #fff"></div>
<div class="a" style="left:414px;top:721px;width:1px;height:16px;background:#c4c4c4;box-shadow:1px 0 0 #fff"></div>
<div class="a" style="left:503px;top:721px;width:1px;height:16px;background:#c4c4c4;box-shadow:1px 0 0 #fff"></div>
<div class="a" style="left:751px;top:721px;width:1px;height:16px;background:#c4c4c4;box-shadow:1px 0 0 #fff"></div>
<div class="a" style="left:858px;top:721px;width:1px;height:16px;background:#c4c4c4;box-shadow:1px 0 0 #fff"></div>
<div class="a" style="left:1067px;top:721px;width:1px;height:16px;background:#c4c4c4;box-shadow:1px 0 0 #fff"></div>
<div class="a" style="left:1234px;top:721px;width:1px;height:16px;background:#c4c4c4;box-shadow:1px 0 0 #fff"></div>
<div class="a" style="left:1292px;top:721px;width:1px;height:16px;background:#c4c4c4;box-shadow:1px 0 0 #fff"></div>
<div class="a" style="left:1328px;top:721px;width:1px;height:16px;background:#c4c4c4;box-shadow:1px 0 0 #fff"></div>
<div class="t" style="left:322px;top:723px;color:#000">简体中文</div>
<div class="t" style="left:420px;top:723px;color:#000">结构化</div>
<div class="t" style="left:756px;top:723px;color:#000">FX2N/FX2NC</div>
<div class="t" style="left:864px;top:723px;color:#000">本站</div>
<div class="t" style="left:1297px;top:723px;color:#9a9a9a">大写</div>
<div class="t" style="left:1333px;top:723px;color:#000">数字</div>
</body></html>
